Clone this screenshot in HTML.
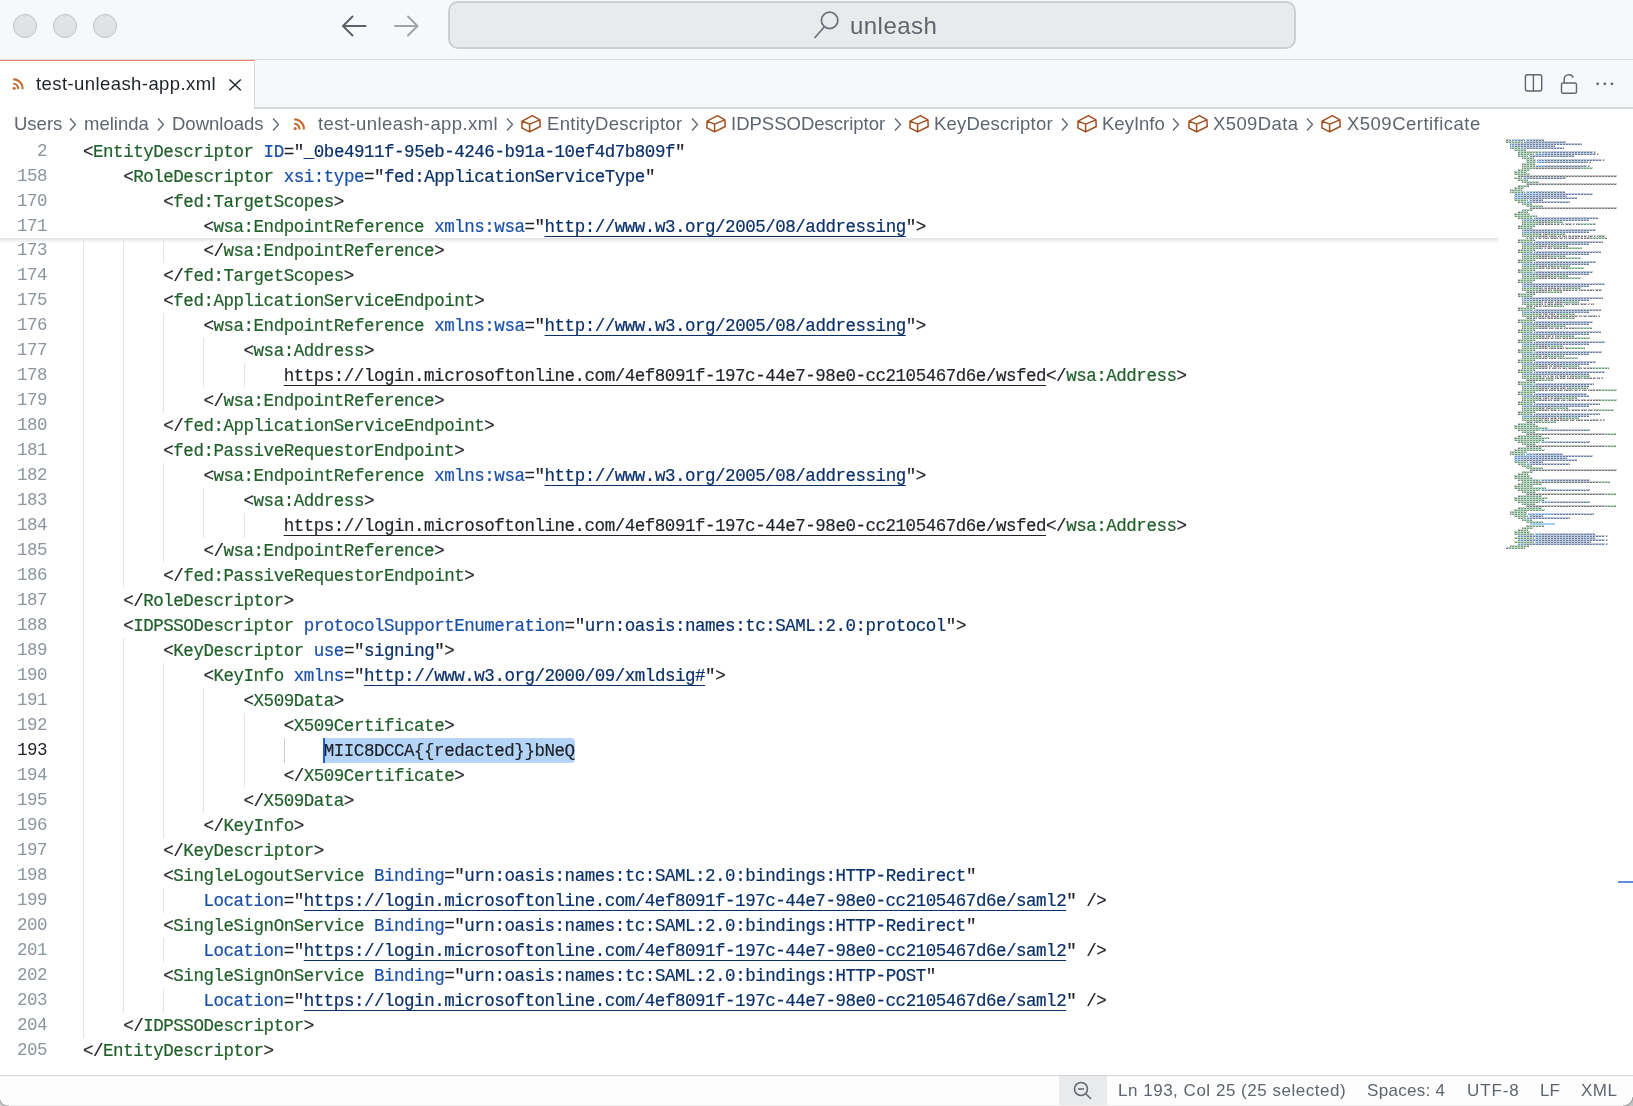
<!DOCTYPE html>
<html><head><meta charset="utf-8">
<style>
html,body{margin:0;padding:0;}
body{width:1633px;height:1106px;overflow:hidden;position:relative;background:#ffffff;font-family:"Liberation Sans",sans-serif;}
.abs{position:absolute;}
/* title bar */
#title{position:absolute;left:0;top:0;width:1633px;height:59px;background:#f7f8fa;border-bottom:1px solid #d6d9dd;}
.tl{position:absolute;top:14px;width:24px;height:24px;border-radius:50%;background:#e1e2e4;border:1px solid #c0c1c3;box-sizing:border-box;}
#search{position:absolute;left:448px;top:1px;width:848px;height:48px;box-sizing:border-box;border:2px solid #cdced1;border-radius:10px;background:#e9eaec;}
#search .txt{position:absolute;left:400px;top:9px;font-size:24px;letter-spacing:0.45px;color:#5f656d;}
/* tab bar */
#tabbar{position:absolute;left:0;top:60px;width:1633px;height:47px;background:#f7f8fa;border-bottom:2px solid #d3d7dd;box-sizing:content-box;}
#tab{position:absolute;left:0;top:60px;width:255px;height:49px;background:#ffffff;border-top:1px solid #f0806a;box-sizing:border-box;border-right:1px solid #d6d9dd;}
#tab .txt{position:absolute;left:36px;top:12px;font-size:18.5px;letter-spacing:0.42px;color:#1f2328;}
/* breadcrumbs */
.bc{position:absolute;top:113px;font-size:18.5px;color:#5e6570;white-space:pre;}
/* editor */
.ln{position:absolute;left:0;width:47px;text-align:right;font-family:"Liberation Mono",monospace;font-size:17.5px;letter-spacing:-0.5px;line-height:25px;color:#8c959f;}
.ln.act{color:#1f2328;}
.cl{position:absolute;left:83px;font-family:"Liberation Mono",monospace;font-size:17.5px;letter-spacing:-0.47px;line-height:25px;white-space:pre;color:#1f2328;-webkit-text-stroke:0.2px currentColor;}
.p{color:#1f2328}
.t{color:#1f5f29}
.a{color:#1a50a8}
.s{color:#0a3069}
.su{color:#0a3069;text-decoration:underline;text-underline-offset:4px;text-decoration-thickness:1.3px;}
.x{color:#1f2328}
.xu{color:#1f2328;text-decoration:underline;text-underline-offset:4px;text-decoration-thickness:1.3px;}
/* status bar */
#status{position:absolute;left:0;top:1075px;width:1633px;height:31px;background:#fdfdfd;border-top:1px solid #d3d7dd;box-sizing:border-box;}
.g{position:absolute;width:1px;height:25px;background:#e6e6e6;}
.g.ga{background:#cccccc;}
.st{position:absolute;top:1081px;font-size:17px;color:#5e6570;white-space:pre;}
</style></head>
<body>
<div id="root" style="position:absolute;left:0;top:0;width:1633px;height:1106px;will-change:transform">
<div id="title">
  <div class="tl" style="left:13px"></div>
  <div class="tl" style="left:53px"></div>
  <div class="tl" style="left:93px"></div>
  <svg class="abs" style="left:336px;top:10px" width="36" height="32" viewBox="0 0 36 32"><path d="M7.5 16 H29.5 M16.5 6.5 L7 16 L16.5 25.5" fill="none" stroke="#5c636b" stroke-width="2" stroke-linecap="round"/></svg>
  <svg class="abs" style="left:390px;top:10px" width="36" height="32" viewBox="0 0 36 32"><path d="M5 16 H27 M18 6.5 L27.5 16 L18 25.5" fill="none" stroke="#a0a3a8" stroke-width="2" stroke-linecap="round"/></svg>
</div>
<div id="search">
  <svg class="abs" style="left:363px;top:8px" width="30" height="32" viewBox="0 0 30 32"><circle cx="16.6" cy="9.4" r="8.2" fill="none" stroke="#6a7078" stroke-width="1.7"/><path d="M11.4 15.8 L1.6 27" stroke="#6a7078" stroke-width="1.7" fill="none"/></svg>
  <div class="txt">unleash</div>
</div>
<div id="tabbar"></div>
<div id="tab">
  <svg class="abs" style="left:12px;top:16px" width="14" height="14" viewBox="0 0 14 14"><circle cx="2.2" cy="11.2" r="1.5" fill="#c0682a"/><path d="M1.2 6.6 A5 5 0 0 1 6.2 12.2" fill="none" stroke="#c0682a" stroke-width="1.9"/><path d="M1.2 2.2 A9.4 9.4 0 0 1 10.6 12.2" fill="none" stroke="#c0682a" stroke-width="1.9"/></svg>
  <div class="txt">test-unleash-app.xml</div>
  <svg class="abs" style="left:227px;top:16px" width="16" height="16" viewBox="0 0 16 16"><path d="M2.4 2.4 L13.8 13.3 M13.8 2.4 L2.4 13.3" stroke="#1f2328" stroke-width="1.4"/></svg>
</div>
<!-- tab bar right icons -->
<svg class="abs" style="left:1522px;top:72px" width="22" height="22" viewBox="0 0 22 22"><rect x="3.4" y="2.7" width="16.3" height="16.3" rx="2" fill="none" stroke="#5e6570" stroke-width="1.4"/><path d="M11.4 2.7 V19" stroke="#5e6570" stroke-width="1.4"/></svg>
<svg class="abs" style="left:1558px;top:72px" width="22" height="24" viewBox="0 0 22 24"><rect x="3.5" y="11" width="15" height="10.3" rx="1.6" fill="none" stroke="#5e6570" stroke-width="1.4"/><path d="M6.2 11 V7.8 A4.7 4.7 0 0 1 15.2 5.6" fill="none" stroke="#5e6570" stroke-width="1.4"/></svg>
<svg class="abs" style="left:1594px;top:76px" width="22" height="14" viewBox="0 0 22 14"><circle cx="3.7" cy="7.8" r="1.4" fill="#5e6570"/><circle cx="10.8" cy="7.8" r="1.4" fill="#5e6570"/><circle cx="17.9" cy="7.8" r="1.4" fill="#5e6570"/></svg>

<!-- breadcrumbs -->
<div class="bc" style="left:14px;letter-spacing:0px">Users</div>
<svg class="abs" style="left:68px;top:117px" width="10" height="15" viewBox="0 0 10 15"><path d="M2 1.5 L7.5 7.5 L2 13.5" fill="none" stroke="#5e6570" stroke-width="1.3"/></svg>
<div class="bc" style="left:84px;letter-spacing:0px">melinda</div>
<svg class="abs" style="left:156px;top:117px" width="10" height="15" viewBox="0 0 10 15"><path d="M2 1.5 L7.5 7.5 L2 13.5" fill="none" stroke="#5e6570" stroke-width="1.3"/></svg>
<div class="bc" style="left:172px;letter-spacing:0px">Downloads</div>
<svg class="abs" style="left:271px;top:117px" width="10" height="15" viewBox="0 0 10 15"><path d="M2 1.5 L7.5 7.5 L2 13.5" fill="none" stroke="#5e6570" stroke-width="1.3"/></svg>
<svg class="abs" style="left:293px;top:117px" width="14" height="14" viewBox="0 0 14 14"><circle cx="2.2" cy="11.5" r="1.6" fill="#c0682a"/><path d="M1.2 6.8 A5.2 5.2 0 0 1 6.5 12.5" fill="none" stroke="#c0682a" stroke-width="2"/><path d="M1.2 2.2 A9.6 9.6 0 0 1 10.9 12.5" fill="none" stroke="#c0682a" stroke-width="2"/></svg>
<div class="bc" style="left:318px;letter-spacing:0.42px">test-unleash-app.xml</div>
<svg class="abs" style="left:505px;top:117px" width="10" height="15" viewBox="0 0 10 15"><path d="M2 1.5 L7.5 7.5 L2 13.5" fill="none" stroke="#5e6570" stroke-width="1.3"/></svg>
<svg class="abs" style="left:520px;top:114px" width="23" height="20" viewBox="0 0 23 20"><path d="M12.4 1.6 L19.9 5.9 L20.2 12.5 L9.6 17.9 L1.9 13.9 L2.1 7.1 Z M2.1 7.1 L9.6 10.1 L19.9 5.9 M9.6 10.1 V17.9" fill="none" stroke="#a04e1c" stroke-width="1.5" stroke-linejoin="round"/></svg>
<div class="bc" style="left:547px;letter-spacing:0.3px">EntityDescriptor</div>
<svg class="abs" style="left:690px;top:117px" width="10" height="15" viewBox="0 0 10 15"><path d="M2 1.5 L7.5 7.5 L2 13.5" fill="none" stroke="#5e6570" stroke-width="1.3"/></svg>
<svg class="abs" style="left:705px;top:114px" width="23" height="20" viewBox="0 0 23 20"><path d="M12.4 1.6 L19.9 5.9 L20.2 12.5 L9.6 17.9 L1.9 13.9 L2.1 7.1 Z M2.1 7.1 L9.6 10.1 L19.9 5.9 M9.6 10.1 V17.9" fill="none" stroke="#a04e1c" stroke-width="1.5" stroke-linejoin="round"/></svg>
<div class="bc" style="left:731px;letter-spacing:0px">IDPSSODescriptor</div>
<svg class="abs" style="left:893px;top:117px" width="10" height="15" viewBox="0 0 10 15"><path d="M2 1.5 L7.5 7.5 L2 13.5" fill="none" stroke="#5e6570" stroke-width="1.3"/></svg>
<svg class="abs" style="left:908px;top:114px" width="23" height="20" viewBox="0 0 23 20"><path d="M12.4 1.6 L19.9 5.9 L20.2 12.5 L9.6 17.9 L1.9 13.9 L2.1 7.1 Z M2.1 7.1 L9.6 10.1 L19.9 5.9 M9.6 10.1 V17.9" fill="none" stroke="#a04e1c" stroke-width="1.5" stroke-linejoin="round"/></svg>
<div class="bc" style="left:934px;letter-spacing:0.2px">KeyDescriptor</div>
<svg class="abs" style="left:1060px;top:117px" width="10" height="15" viewBox="0 0 10 15"><path d="M2 1.5 L7.5 7.5 L2 13.5" fill="none" stroke="#5e6570" stroke-width="1.3"/></svg>
<svg class="abs" style="left:1076px;top:114px" width="23" height="20" viewBox="0 0 23 20"><path d="M12.4 1.6 L19.9 5.9 L20.2 12.5 L9.6 17.9 L1.9 13.9 L2.1 7.1 Z M2.1 7.1 L9.6 10.1 L19.9 5.9 M9.6 10.1 V17.9" fill="none" stroke="#a04e1c" stroke-width="1.5" stroke-linejoin="round"/></svg>
<div class="bc" style="left:1102px;letter-spacing:0px">KeyInfo</div>
<svg class="abs" style="left:1171px;top:117px" width="10" height="15" viewBox="0 0 10 15"><path d="M2 1.5 L7.5 7.5 L2 13.5" fill="none" stroke="#5e6570" stroke-width="1.3"/></svg>
<svg class="abs" style="left:1187px;top:114px" width="23" height="20" viewBox="0 0 23 20"><path d="M12.4 1.6 L19.9 5.9 L20.2 12.5 L9.6 17.9 L1.9 13.9 L2.1 7.1 Z M2.1 7.1 L9.6 10.1 L19.9 5.9 M9.6 10.1 V17.9" fill="none" stroke="#a04e1c" stroke-width="1.5" stroke-linejoin="round"/></svg>
<div class="bc" style="left:1213px;letter-spacing:0.38px">X509Data</div>
<svg class="abs" style="left:1305px;top:117px" width="10" height="15" viewBox="0 0 10 15"><path d="M2 1.5 L7.5 7.5 L2 13.5" fill="none" stroke="#5e6570" stroke-width="1.3"/></svg>
<svg class="abs" style="left:1320px;top:114px" width="23" height="20" viewBox="0 0 23 20"><path d="M12.4 1.6 L19.9 5.9 L20.2 12.5 L9.6 17.9 L1.9 13.9 L2.1 7.1 Z M2.1 7.1 L9.6 10.1 L19.9 5.9 M9.6 10.1 V17.9" fill="none" stroke="#a04e1c" stroke-width="1.5" stroke-linejoin="round"/></svg>
<div class="bc" style="left:1347px;letter-spacing:0.48px">X509Certificate</div>

<!-- editor -->
<div class="g" style="left:83px;top:238px"></div>
<div class="g" style="left:123px;top:238px"></div>
<div class="g" style="left:163px;top:238px"></div>
<div class="g" style="left:83px;top:263px"></div>
<div class="g" style="left:123px;top:263px"></div>
<div class="g" style="left:83px;top:288px"></div>
<div class="g" style="left:123px;top:288px"></div>
<div class="g" style="left:83px;top:313px"></div>
<div class="g" style="left:123px;top:313px"></div>
<div class="g" style="left:163px;top:313px"></div>
<div class="g" style="left:83px;top:338px"></div>
<div class="g" style="left:123px;top:338px"></div>
<div class="g" style="left:163px;top:338px"></div>
<div class="g" style="left:203px;top:338px"></div>
<div class="g" style="left:83px;top:363px"></div>
<div class="g" style="left:123px;top:363px"></div>
<div class="g" style="left:163px;top:363px"></div>
<div class="g" style="left:203px;top:363px"></div>
<div class="g" style="left:244px;top:363px"></div>
<div class="g" style="left:83px;top:388px"></div>
<div class="g" style="left:123px;top:388px"></div>
<div class="g" style="left:163px;top:388px"></div>
<div class="g" style="left:83px;top:413px"></div>
<div class="g" style="left:123px;top:413px"></div>
<div class="g" style="left:83px;top:438px"></div>
<div class="g" style="left:123px;top:438px"></div>
<div class="g" style="left:83px;top:463px"></div>
<div class="g" style="left:123px;top:463px"></div>
<div class="g" style="left:163px;top:463px"></div>
<div class="g" style="left:83px;top:488px"></div>
<div class="g" style="left:123px;top:488px"></div>
<div class="g" style="left:163px;top:488px"></div>
<div class="g" style="left:203px;top:488px"></div>
<div class="g" style="left:83px;top:513px"></div>
<div class="g" style="left:123px;top:513px"></div>
<div class="g" style="left:163px;top:513px"></div>
<div class="g" style="left:203px;top:513px"></div>
<div class="g" style="left:244px;top:513px"></div>
<div class="g" style="left:83px;top:538px"></div>
<div class="g" style="left:123px;top:538px"></div>
<div class="g" style="left:163px;top:538px"></div>
<div class="g" style="left:83px;top:563px"></div>
<div class="g" style="left:123px;top:563px"></div>
<div class="g" style="left:83px;top:588px"></div>
<div class="g" style="left:83px;top:613px"></div>
<div class="g" style="left:83px;top:638px"></div>
<div class="g" style="left:123px;top:638px"></div>
<div class="g" style="left:83px;top:663px"></div>
<div class="g" style="left:123px;top:663px"></div>
<div class="g" style="left:163px;top:663px"></div>
<div class="g" style="left:83px;top:688px"></div>
<div class="g" style="left:123px;top:688px"></div>
<div class="g" style="left:163px;top:688px"></div>
<div class="g" style="left:203px;top:688px"></div>
<div class="g" style="left:83px;top:713px"></div>
<div class="g" style="left:123px;top:713px"></div>
<div class="g" style="left:163px;top:713px"></div>
<div class="g" style="left:203px;top:713px"></div>
<div class="g" style="left:244px;top:713px"></div>
<div class="g" style="left:83px;top:738px"></div>
<div class="g" style="left:123px;top:738px"></div>
<div class="g" style="left:163px;top:738px"></div>
<div class="g" style="left:203px;top:738px"></div>
<div class="g" style="left:244px;top:738px"></div>
<div class="g ga" style="left:284px;top:738px"></div>
<div class="g" style="left:83px;top:763px"></div>
<div class="g" style="left:123px;top:763px"></div>
<div class="g" style="left:163px;top:763px"></div>
<div class="g" style="left:203px;top:763px"></div>
<div class="g" style="left:244px;top:763px"></div>
<div class="g" style="left:83px;top:788px"></div>
<div class="g" style="left:123px;top:788px"></div>
<div class="g" style="left:163px;top:788px"></div>
<div class="g" style="left:203px;top:788px"></div>
<div class="g" style="left:83px;top:813px"></div>
<div class="g" style="left:123px;top:813px"></div>
<div class="g" style="left:163px;top:813px"></div>
<div class="g" style="left:83px;top:838px"></div>
<div class="g" style="left:123px;top:838px"></div>
<div class="g" style="left:83px;top:863px"></div>
<div class="g" style="left:123px;top:863px"></div>
<div class="g" style="left:83px;top:888px"></div>
<div class="g" style="left:123px;top:888px"></div>
<div class="g" style="left:163px;top:888px"></div>
<div class="g" style="left:83px;top:913px"></div>
<div class="g" style="left:123px;top:913px"></div>
<div class="g" style="left:83px;top:938px"></div>
<div class="g" style="left:123px;top:938px"></div>
<div class="g" style="left:163px;top:938px"></div>
<div class="g" style="left:83px;top:963px"></div>
<div class="g" style="left:123px;top:963px"></div>
<div class="g" style="left:83px;top:988px"></div>
<div class="g" style="left:123px;top:988px"></div>
<div class="g" style="left:163px;top:988px"></div>
<div class="g" style="left:83px;top:1013px"></div>
<div class="abs" style="left:325px;top:738px;width:250px;height:25px;background:#b5d5f8;border-radius:0 4px 4px 0"></div>
<div class="ln" style="top:139px">2</div>
<div class="ln" style="top:164px">158</div>
<div class="ln" style="top:189px">170</div>
<div class="ln" style="top:214px">171</div>
<div class="ln" style="top:238px">173</div>
<div class="ln" style="top:263px">174</div>
<div class="ln" style="top:288px">175</div>
<div class="ln" style="top:313px">176</div>
<div class="ln" style="top:338px">177</div>
<div class="ln" style="top:363px">178</div>
<div class="ln" style="top:388px">179</div>
<div class="ln" style="top:413px">180</div>
<div class="ln" style="top:438px">181</div>
<div class="ln" style="top:463px">182</div>
<div class="ln" style="top:488px">183</div>
<div class="ln" style="top:513px">184</div>
<div class="ln" style="top:538px">185</div>
<div class="ln" style="top:563px">186</div>
<div class="ln" style="top:588px">187</div>
<div class="ln" style="top:613px">188</div>
<div class="ln" style="top:638px">189</div>
<div class="ln" style="top:663px">190</div>
<div class="ln" style="top:688px">191</div>
<div class="ln" style="top:713px">192</div>
<div class="ln act" style="top:738px">193</div>
<div class="ln" style="top:763px">194</div>
<div class="ln" style="top:788px">195</div>
<div class="ln" style="top:813px">196</div>
<div class="ln" style="top:838px">197</div>
<div class="ln" style="top:863px">198</div>
<div class="ln" style="top:888px">199</div>
<div class="ln" style="top:913px">200</div>
<div class="ln" style="top:938px">201</div>
<div class="ln" style="top:963px">202</div>
<div class="ln" style="top:988px">203</div>
<div class="ln" style="top:1013px">204</div>
<div class="ln" style="top:1038px">205</div>
<div class="cl" style="top:140px"><span class="p">&lt;</span><span class="t">EntityDescriptor</span> <span class="a">ID</span><span class="p">=</span><span class="p">&quot;</span><span class="s">_0be4911f-95eb-4246-b91a-10ef4d7b809f</span><span class="p">&quot;</span></div>
<div class="cl" style="top:165px">    <span class="p">&lt;</span><span class="t">RoleDescriptor</span> <span class="a">xsi:type</span><span class="p">=</span><span class="p">&quot;</span><span class="s">fed:ApplicationServiceType</span><span class="p">&quot;</span></div>
<div class="cl" style="top:190px">        <span class="p">&lt;</span><span class="t">fed:TargetScopes</span><span class="p">&gt;</span></div>
<div class="cl" style="top:215px">            <span class="p">&lt;</span><span class="t">wsa:EndpointReference</span> <span class="a">xmlns:wsa</span><span class="p">=</span><span class="p">&quot;</span><span class="su">http://www.w3.org/2005/08/addressing</span><span class="p">&quot;</span><span class="p">&gt;</span></div>
<div class="cl" style="top:239px">            <span class="p">&lt;/</span><span class="t">wsa:EndpointReference</span><span class="p">&gt;</span></div>
<div class="cl" style="top:264px">        <span class="p">&lt;/</span><span class="t">fed:TargetScopes</span><span class="p">&gt;</span></div>
<div class="cl" style="top:289px">        <span class="p">&lt;</span><span class="t">fed:ApplicationServiceEndpoint</span><span class="p">&gt;</span></div>
<div class="cl" style="top:314px">            <span class="p">&lt;</span><span class="t">wsa:EndpointReference</span> <span class="a">xmlns:wsa</span><span class="p">=</span><span class="p">&quot;</span><span class="su">http://www.w3.org/2005/08/addressing</span><span class="p">&quot;</span><span class="p">&gt;</span></div>
<div class="cl" style="top:339px">                <span class="p">&lt;</span><span class="t">wsa:Address</span><span class="p">&gt;</span></div>
<div class="cl" style="top:364px">                    <span class="xu">https://login.microsoftonline.com/4ef8091f-197c-44e7-98e0-cc2105467d6e/wsfed</span><span class="p">&lt;/</span><span class="t">wsa:Address</span><span class="p">&gt;</span></div>
<div class="cl" style="top:389px">            <span class="p">&lt;/</span><span class="t">wsa:EndpointReference</span><span class="p">&gt;</span></div>
<div class="cl" style="top:414px">        <span class="p">&lt;/</span><span class="t">fed:ApplicationServiceEndpoint</span><span class="p">&gt;</span></div>
<div class="cl" style="top:439px">        <span class="p">&lt;</span><span class="t">fed:PassiveRequestorEndpoint</span><span class="p">&gt;</span></div>
<div class="cl" style="top:464px">            <span class="p">&lt;</span><span class="t">wsa:EndpointReference</span> <span class="a">xmlns:wsa</span><span class="p">=</span><span class="p">&quot;</span><span class="su">http://www.w3.org/2005/08/addressing</span><span class="p">&quot;</span><span class="p">&gt;</span></div>
<div class="cl" style="top:489px">                <span class="p">&lt;</span><span class="t">wsa:Address</span><span class="p">&gt;</span></div>
<div class="cl" style="top:514px">                    <span class="xu">https://login.microsoftonline.com/4ef8091f-197c-44e7-98e0-cc2105467d6e/wsfed</span><span class="p">&lt;/</span><span class="t">wsa:Address</span><span class="p">&gt;</span></div>
<div class="cl" style="top:539px">            <span class="p">&lt;/</span><span class="t">wsa:EndpointReference</span><span class="p">&gt;</span></div>
<div class="cl" style="top:564px">        <span class="p">&lt;/</span><span class="t">fed:PassiveRequestorEndpoint</span><span class="p">&gt;</span></div>
<div class="cl" style="top:589px">    <span class="p">&lt;/</span><span class="t">RoleDescriptor</span><span class="p">&gt;</span></div>
<div class="cl" style="top:614px">    <span class="p">&lt;</span><span class="t">IDPSSODescriptor</span> <span class="a">protocolSupportEnumeration</span><span class="p">=</span><span class="p">&quot;</span><span class="s">urn:oasis:names:tc:SAML:2.0:protocol</span><span class="p">&quot;</span><span class="p">&gt;</span></div>
<div class="cl" style="top:639px">        <span class="p">&lt;</span><span class="t">KeyDescriptor</span> <span class="a">use</span><span class="p">=</span><span class="p">&quot;</span><span class="s">signing</span><span class="p">&quot;</span><span class="p">&gt;</span></div>
<div class="cl" style="top:664px">            <span class="p">&lt;</span><span class="t">KeyInfo</span> <span class="a">xmlns</span><span class="p">=</span><span class="p">&quot;</span><span class="su">http://www.w3.org/2000/09/xmldsig#</span><span class="p">&quot;</span><span class="p">&gt;</span></div>
<div class="cl" style="top:689px">                <span class="p">&lt;</span><span class="t">X509Data</span><span class="p">&gt;</span></div>
<div class="cl" style="top:714px">                    <span class="p">&lt;</span><span class="t">X509Certificate</span><span class="p">&gt;</span></div>
<div class="cl" style="top:739px">                        <span class="x">MIIC8DCCA{{redacted}}bNeQ</span></div>
<div class="cl" style="top:764px">                    <span class="p">&lt;/</span><span class="t">X509Certificate</span><span class="p">&gt;</span></div>
<div class="cl" style="top:789px">                <span class="p">&lt;/</span><span class="t">X509Data</span><span class="p">&gt;</span></div>
<div class="cl" style="top:814px">            <span class="p">&lt;/</span><span class="t">KeyInfo</span><span class="p">&gt;</span></div>
<div class="cl" style="top:839px">        <span class="p">&lt;/</span><span class="t">KeyDescriptor</span><span class="p">&gt;</span></div>
<div class="cl" style="top:864px">        <span class="p">&lt;</span><span class="t">SingleLogoutService</span> <span class="a">Binding</span><span class="p">=</span><span class="p">&quot;</span><span class="s">urn:oasis:names:tc:SAML:2.0:bindings:HTTP-Redirect</span><span class="p">&quot;</span></div>
<div class="cl" style="top:889px">            <span class="a">Location</span><span class="p">=</span><span class="p">&quot;</span><span class="su">https://login.microsoftonline.com/4ef8091f-197c-44e7-98e0-cc2105467d6e/saml2</span><span class="p">&quot;</span> <span class="p">/&gt;</span></div>
<div class="cl" style="top:914px">        <span class="p">&lt;</span><span class="t">SingleSignOnService</span> <span class="a">Binding</span><span class="p">=</span><span class="p">&quot;</span><span class="s">urn:oasis:names:tc:SAML:2.0:bindings:HTTP-Redirect</span><span class="p">&quot;</span></div>
<div class="cl" style="top:939px">            <span class="a">Location</span><span class="p">=</span><span class="p">&quot;</span><span class="su">https://login.microsoftonline.com/4ef8091f-197c-44e7-98e0-cc2105467d6e/saml2</span><span class="p">&quot;</span> <span class="p">/&gt;</span></div>
<div class="cl" style="top:964px">        <span class="p">&lt;</span><span class="t">SingleSignOnService</span> <span class="a">Binding</span><span class="p">=</span><span class="p">&quot;</span><span class="s">urn:oasis:names:tc:SAML:2.0:bindings:HTTP-POST</span><span class="p">&quot;</span></div>
<div class="cl" style="top:989px">            <span class="a">Location</span><span class="p">=</span><span class="p">&quot;</span><span class="su">https://login.microsoftonline.com/4ef8091f-197c-44e7-98e0-cc2105467d6e/saml2</span><span class="p">&quot;</span> <span class="p">/&gt;</span></div>
<div class="cl" style="top:1014px">    <span class="p">&lt;/</span><span class="t">IDPSSODescriptor</span><span class="p">&gt;</span></div>
<div class="cl" style="top:1039px"><span class="p">&lt;/</span><span class="t">EntityDescriptor</span><span class="p">&gt;</span></div>
<div class="abs" style="left:323px;top:738px;width:2px;height:25px;background:#1f5bd6"></div>
<div class="abs" style="left:0;top:238px;width:1498px;height:5px;background:linear-gradient(#dfe1e4,rgba(255,255,255,0))"></div>
<svg class="abs" style="left:0;top:0" width="1633" height="1106"><defs><pattern id="pt" x="0" y="0" width="3" height="2" patternUnits="userSpaceOnUse"><rect x="0" y="0" width="2" height="1" fill="#116329" opacity="0.62"/><rect x="0" y="1" width="3" height="1" fill="#116329" opacity="0.26"/><rect x="2" y="0" width="1" height="1" fill="#116329" opacity="0.22"/></pattern><pattern id="pa" x="0" y="0" width="3" height="2" patternUnits="userSpaceOnUse"><rect x="0" y="0" width="2" height="1" fill="#0550ae" opacity="0.62"/><rect x="0" y="1" width="3" height="1" fill="#0550ae" opacity="0.26"/><rect x="2" y="0" width="1" height="1" fill="#0550ae" opacity="0.22"/></pattern><pattern id="ps" x="0" y="0" width="3" height="2" patternUnits="userSpaceOnUse"><rect x="0" y="0" width="2" height="1" fill="#0a3069" opacity="0.62"/><rect x="0" y="1" width="3" height="1" fill="#0a3069" opacity="0.26"/><rect x="2" y="0" width="1" height="1" fill="#0a3069" opacity="0.22"/></pattern><pattern id="px" x="0" y="0" width="3" height="2" patternUnits="userSpaceOnUse"><rect x="0" y="0" width="2" height="1" fill="#1f2328" opacity="0.62"/><rect x="0" y="1" width="3" height="1" fill="#1f2328" opacity="0.26"/><rect x="2" y="0" width="1" height="1" fill="#1f2328" opacity="0.22"/></pattern></defs><g><rect x="1506" y="139" width="2" height="2" fill="url(#px)"/><rect x="1508" y="139" width="3" height="2" fill="url(#pt)"/><rect x="1512" y="139" width="7" height="2" fill="url(#pa)"/><rect x="1519" y="139" width="1" height="2" fill="url(#px)"/><rect x="1520" y="139" width="1" height="2" fill="url(#px)"/><rect x="1521" y="139" width="3" height="2" fill="url(#ps)"/><rect x="1524" y="139" width="1" height="2" fill="url(#px)"/><rect x="1526" y="139" width="8" height="2" fill="url(#pa)"/><rect x="1534" y="139" width="1" height="2" fill="url(#px)"/><rect x="1535" y="139" width="1" height="2" fill="url(#px)"/><rect x="1536" y="139" width="5" height="2" fill="url(#ps)"/><rect x="1541" y="139" width="1" height="2" fill="url(#px)"/><rect x="1542" y="139" width="2" height="2" fill="url(#px)"/><rect x="1506" y="141" width="1" height="2" fill="url(#px)"/><rect x="1507" y="141" width="16" height="2" fill="url(#pt)"/><rect x="1524" y="141" width="2" height="2" fill="url(#pa)"/><rect x="1526" y="141" width="1" height="2" fill="url(#px)"/><rect x="1527" y="141" width="1" height="2" fill="url(#px)"/><rect x="1528" y="141" width="37" height="2" fill="url(#ps)"/><rect x="1565" y="141" width="1" height="2" fill="url(#px)"/><rect x="1510" y="143" width="8" height="2" fill="url(#pa)"/><rect x="1518" y="143" width="1" height="2" fill="url(#px)"/><rect x="1519" y="143" width="1" height="2" fill="url(#px)"/><rect x="1520" y="143" width="61" height="2" fill="url(#ps)"/><rect x="1581" y="143" width="1" height="2" fill="url(#px)"/><rect x="1510" y="145" width="5" height="2" fill="url(#pa)"/><rect x="1515" y="145" width="1" height="2" fill="url(#px)"/><rect x="1516" y="145" width="1" height="2" fill="url(#px)"/><rect x="1517" y="145" width="36" height="2" fill="url(#ps)"/><rect x="1553" y="145" width="1" height="2" fill="url(#px)"/><rect x="1554" y="145" width="1" height="2" fill="url(#px)"/><rect x="1510" y="147" width="1" height="2" fill="url(#px)"/><rect x="1511" y="147" width="9" height="2" fill="url(#pt)"/><rect x="1521" y="147" width="5" height="2" fill="url(#pa)"/><rect x="1526" y="147" width="1" height="2" fill="url(#px)"/><rect x="1527" y="147" width="1" height="2" fill="url(#px)"/><rect x="1528" y="147" width="34" height="2" fill="url(#ps)"/><rect x="1562" y="147" width="1" height="2" fill="url(#px)"/><rect x="1563" y="147" width="1" height="2" fill="url(#px)"/><rect x="1514" y="149" width="1" height="2" fill="url(#px)"/><rect x="1515" y="149" width="10" height="2" fill="url(#pt)"/><rect x="1525" y="149" width="1" height="2" fill="url(#px)"/><rect x="1518" y="151" width="1" height="2" fill="url(#px)"/><rect x="1519" y="151" width="22" height="2" fill="url(#pt)"/><rect x="1542" y="151" width="9" height="2" fill="url(#pa)"/><rect x="1551" y="151" width="1" height="2" fill="url(#px)"/><rect x="1552" y="151" width="1" height="2" fill="url(#px)"/><rect x="1553" y="151" width="39" height="2" fill="url(#ps)"/><rect x="1592" y="151" width="1" height="2" fill="url(#px)"/><rect x="1594" y="151" width="2" height="2" fill="url(#px)"/><rect x="1518" y="153" width="1" height="2" fill="url(#px)"/><rect x="1519" y="153" width="15" height="2" fill="url(#pt)"/><rect x="1535" y="153" width="9" height="2" fill="url(#pa)"/><rect x="1544" y="153" width="1" height="2" fill="url(#px)"/><rect x="1545" y="153" width="1" height="2" fill="url(#px)"/><rect x="1546" y="153" width="49" height="2" fill="url(#ps)"/><rect x="1595" y="153" width="1" height="2" fill="url(#px)"/><rect x="1597" y="153" width="2" height="2" fill="url(#px)"/><rect x="1518" y="155" width="1" height="2" fill="url(#px)"/><rect x="1519" y="155" width="9" height="2" fill="url(#pt)"/><rect x="1529" y="155" width="3" height="2" fill="url(#pa)"/><rect x="1532" y="155" width="1" height="2" fill="url(#px)"/><rect x="1533" y="155" width="1" height="2" fill="url(#px)"/><rect x="1534" y="155" width="38" height="2" fill="url(#ps)"/><rect x="1572" y="155" width="1" height="2" fill="url(#px)"/><rect x="1573" y="155" width="1" height="2" fill="url(#px)"/><rect x="1522" y="157" width="1" height="2" fill="url(#px)"/><rect x="1523" y="157" width="10" height="2" fill="url(#pt)"/><rect x="1533" y="157" width="1" height="2" fill="url(#px)"/><rect x="1526" y="159" width="1" height="2" fill="url(#px)"/><rect x="1527" y="159" width="9" height="2" fill="url(#pt)"/><rect x="1537" y="159" width="9" height="2" fill="url(#pa)"/><rect x="1546" y="159" width="1" height="2" fill="url(#px)"/><rect x="1547" y="159" width="1" height="2" fill="url(#px)"/><rect x="1548" y="159" width="53" height="2" fill="url(#ps)"/><rect x="1601" y="159" width="1" height="2" fill="url(#px)"/><rect x="1603" y="159" width="2" height="2" fill="url(#px)"/><rect x="1526" y="161" width="1" height="2" fill="url(#px)"/><rect x="1527" y="161" width="9" height="2" fill="url(#pt)"/><rect x="1537" y="161" width="9" height="2" fill="url(#pa)"/><rect x="1546" y="161" width="1" height="2" fill="url(#px)"/><rect x="1547" y="161" width="1" height="2" fill="url(#px)"/><rect x="1548" y="161" width="39" height="2" fill="url(#ps)"/><rect x="1587" y="161" width="1" height="2" fill="url(#px)"/><rect x="1589" y="161" width="2" height="2" fill="url(#px)"/><rect x="1522" y="163" width="2" height="2" fill="url(#px)"/><rect x="1524" y="163" width="10" height="2" fill="url(#pt)"/><rect x="1534" y="163" width="1" height="2" fill="url(#px)"/><rect x="1522" y="165" width="1" height="2" fill="url(#px)"/><rect x="1523" y="165" width="12" height="2" fill="url(#pt)"/><rect x="1536" y="165" width="9" height="2" fill="url(#pa)"/><rect x="1545" y="165" width="1" height="2" fill="url(#px)"/><rect x="1546" y="165" width="1" height="2" fill="url(#px)"/><rect x="1547" y="165" width="39" height="2" fill="url(#ps)"/><rect x="1586" y="165" width="1" height="2" fill="url(#px)"/><rect x="1588" y="165" width="2" height="2" fill="url(#px)"/><rect x="1522" y="167" width="1" height="2" fill="url(#px)"/><rect x="1523" y="167" width="11" height="2" fill="url(#pt)"/><rect x="1534" y="167" width="1" height="2" fill="url(#px)"/><rect x="1535" y="167" width="44" height="2" fill="url(#px)"/><rect x="1579" y="167" width="2" height="2" fill="url(#px)"/><rect x="1581" y="167" width="11" height="2" fill="url(#pt)"/><rect x="1592" y="167" width="1" height="2" fill="url(#px)"/><rect x="1518" y="169" width="2" height="2" fill="url(#px)"/><rect x="1520" y="169" width="9" height="2" fill="url(#pt)"/><rect x="1529" y="169" width="1" height="2" fill="url(#px)"/><rect x="1514" y="171" width="2" height="2" fill="url(#px)"/><rect x="1516" y="171" width="10" height="2" fill="url(#pt)"/><rect x="1526" y="171" width="1" height="2" fill="url(#px)"/><rect x="1514" y="173" width="1" height="2" fill="url(#px)"/><rect x="1515" y="173" width="14" height="2" fill="url(#pt)"/><rect x="1529" y="173" width="1" height="2" fill="url(#px)"/><rect x="1518" y="175" width="99" height="2" fill="url(#px)"/><rect x="1514" y="177" width="1" height="2" fill="url(#px)"/><rect x="1515" y="177" width="7" height="2" fill="url(#pt)"/><rect x="1523" y="177" width="5" height="2" fill="url(#pa)"/><rect x="1528" y="177" width="1" height="2" fill="url(#px)"/><rect x="1529" y="177" width="1" height="2" fill="url(#px)"/><rect x="1530" y="177" width="34" height="2" fill="url(#ps)"/><rect x="1564" y="177" width="1" height="2" fill="url(#px)"/><rect x="1565" y="177" width="1" height="2" fill="url(#px)"/><rect x="1518" y="179" width="1" height="2" fill="url(#px)"/><rect x="1519" y="179" width="8" height="2" fill="url(#pt)"/><rect x="1527" y="179" width="1" height="2" fill="url(#px)"/><rect x="1522" y="181" width="1" height="2" fill="url(#px)"/><rect x="1523" y="181" width="15" height="2" fill="url(#pt)"/><rect x="1538" y="181" width="1" height="2" fill="url(#px)"/><rect x="1526" y="183" width="91" height="2" fill="url(#px)"/><rect x="1518" y="185" width="2" height="2" fill="url(#px)"/><rect x="1520" y="185" width="8" height="2" fill="url(#pt)"/><rect x="1528" y="185" width="1" height="2" fill="url(#px)"/><rect x="1514" y="187" width="2" height="2" fill="url(#px)"/><rect x="1516" y="187" width="7" height="2" fill="url(#pt)"/><rect x="1523" y="187" width="1" height="2" fill="url(#px)"/><rect x="1510" y="189" width="2" height="2" fill="url(#px)"/><rect x="1512" y="189" width="9" height="2" fill="url(#pt)"/><rect x="1521" y="189" width="1" height="2" fill="url(#px)"/><rect x="1510" y="191" width="1" height="2" fill="url(#px)"/><rect x="1511" y="191" width="14" height="2" fill="url(#pt)"/><rect x="1526" y="191" width="8" height="2" fill="url(#pa)"/><rect x="1534" y="191" width="1" height="2" fill="url(#px)"/><rect x="1535" y="191" width="1" height="2" fill="url(#px)"/><rect x="1536" y="191" width="28" height="2" fill="url(#ps)"/><rect x="1564" y="191" width="1" height="2" fill="url(#px)"/><rect x="1514" y="193" width="26" height="2" fill="url(#pa)"/><rect x="1540" y="193" width="1" height="2" fill="url(#px)"/><rect x="1541" y="193" width="1" height="2" fill="url(#px)"/><rect x="1542" y="193" width="50" height="2" fill="url(#ps)"/><rect x="1592" y="193" width="1" height="2" fill="url(#px)"/><rect x="1514" y="195" width="9" height="2" fill="url(#pa)"/><rect x="1523" y="195" width="1" height="2" fill="url(#px)"/><rect x="1524" y="195" width="1" height="2" fill="url(#px)"/><rect x="1525" y="195" width="41" height="2" fill="url(#ps)"/><rect x="1566" y="195" width="1" height="2" fill="url(#px)"/><rect x="1514" y="197" width="9" height="2" fill="url(#pa)"/><rect x="1523" y="197" width="1" height="2" fill="url(#px)"/><rect x="1524" y="197" width="1" height="2" fill="url(#px)"/><rect x="1525" y="197" width="50" height="2" fill="url(#ps)"/><rect x="1575" y="197" width="1" height="2" fill="url(#px)"/><rect x="1576" y="197" width="1" height="2" fill="url(#px)"/><rect x="1514" y="199" width="1" height="2" fill="url(#px)"/><rect x="1515" y="199" width="13" height="2" fill="url(#pt)"/><rect x="1529" y="199" width="3" height="2" fill="url(#pa)"/><rect x="1532" y="199" width="1" height="2" fill="url(#px)"/><rect x="1533" y="199" width="1" height="2" fill="url(#px)"/><rect x="1534" y="199" width="7" height="2" fill="url(#ps)"/><rect x="1541" y="199" width="1" height="2" fill="url(#px)"/><rect x="1542" y="199" width="1" height="2" fill="url(#px)"/><rect x="1518" y="201" width="1" height="2" fill="url(#px)"/><rect x="1519" y="201" width="7" height="2" fill="url(#pt)"/><rect x="1527" y="201" width="5" height="2" fill="url(#pa)"/><rect x="1532" y="201" width="1" height="2" fill="url(#px)"/><rect x="1533" y="201" width="1" height="2" fill="url(#px)"/><rect x="1534" y="201" width="34" height="2" fill="url(#ps)"/><rect x="1568" y="201" width="1" height="2" fill="url(#px)"/><rect x="1569" y="201" width="1" height="2" fill="url(#px)"/><rect x="1522" y="203" width="1" height="2" fill="url(#px)"/><rect x="1523" y="203" width="8" height="2" fill="url(#pt)"/><rect x="1531" y="203" width="1" height="2" fill="url(#px)"/><rect x="1526" y="205" width="1" height="2" fill="url(#px)"/><rect x="1527" y="205" width="15" height="2" fill="url(#pt)"/><rect x="1542" y="205" width="1" height="2" fill="url(#px)"/><rect x="1530" y="207" width="87" height="2" fill="url(#px)"/><rect x="1522" y="209" width="2" height="2" fill="url(#px)"/><rect x="1524" y="209" width="8" height="2" fill="url(#pt)"/><rect x="1532" y="209" width="1" height="2" fill="url(#px)"/><rect x="1518" y="211" width="2" height="2" fill="url(#px)"/><rect x="1520" y="211" width="7" height="2" fill="url(#pt)"/><rect x="1527" y="211" width="1" height="2" fill="url(#px)"/><rect x="1514" y="213" width="2" height="2" fill="url(#px)"/><rect x="1516" y="213" width="13" height="2" fill="url(#pt)"/><rect x="1529" y="213" width="1" height="2" fill="url(#px)"/><rect x="1514" y="215" width="1" height="2" fill="url(#px)"/><rect x="1515" y="215" width="21" height="2" fill="url(#pt)"/><rect x="1536" y="215" width="1" height="2" fill="url(#px)"/><rect x="1518" y="217" width="1" height="2" fill="url(#px)"/><rect x="1519" y="217" width="14" height="2" fill="url(#pt)"/><rect x="1534" y="217" width="3" height="2" fill="url(#pa)"/><rect x="1537" y="217" width="1" height="2" fill="url(#px)"/><rect x="1538" y="217" width="1" height="2" fill="url(#px)"/><rect x="1539" y="217" width="58" height="2" fill="url(#ps)"/><rect x="1597" y="217" width="1" height="2" fill="url(#px)"/><rect x="1522" y="219" width="10" height="2" fill="url(#pa)"/><rect x="1532" y="219" width="1" height="2" fill="url(#px)"/><rect x="1533" y="219" width="1" height="2" fill="url(#px)"/><rect x="1534" y="219" width="53" height="2" fill="url(#ps)"/><rect x="1587" y="219" width="1" height="2" fill="url(#px)"/><rect x="1588" y="219" width="1" height="2" fill="url(#px)"/><rect x="1522" y="221" width="1" height="2" fill="url(#px)"/><rect x="1523" y="221" width="16" height="2" fill="url(#pt)"/><rect x="1539" y="221" width="1" height="2" fill="url(#px)"/><rect x="1540" y="221" width="4" height="2" fill="url(#px)"/><rect x="1544" y="221" width="2" height="2" fill="url(#px)"/><rect x="1546" y="221" width="16" height="2" fill="url(#pt)"/><rect x="1562" y="221" width="1" height="2" fill="url(#px)"/><rect x="1522" y="223" width="1" height="2" fill="url(#px)"/><rect x="1523" y="223" width="16" height="2" fill="url(#pt)"/><rect x="1539" y="223" width="1" height="2" fill="url(#px)"/><rect x="1540" y="223" width="4" height="2" fill="url(#px)"/><rect x="1545" y="223" width="8" height="2" fill="url(#px)"/><rect x="1554" y="223" width="2" height="2" fill="url(#px)"/><rect x="1557" y="223" width="3" height="2" fill="url(#px)"/><rect x="1561" y="223" width="3" height="2" fill="url(#px)"/><rect x="1565" y="223" width="7" height="2" fill="url(#px)"/><rect x="1573" y="223" width="2" height="2" fill="url(#px)"/><rect x="1576" y="223" width="1" height="2" fill="url(#px)"/><rect x="1577" y="223" width="2" height="2" fill="url(#px)"/><rect x="1579" y="223" width="16" height="2" fill="url(#pt)"/><rect x="1595" y="223" width="1" height="2" fill="url(#px)"/><rect x="1518" y="225" width="2" height="2" fill="url(#px)"/><rect x="1520" y="225" width="14" height="2" fill="url(#pt)"/><rect x="1534" y="225" width="1" height="2" fill="url(#px)"/><rect x="1518" y="227" width="1" height="2" fill="url(#px)"/><rect x="1519" y="227" width="14" height="2" fill="url(#pt)"/><rect x="1522" y="229" width="3" height="2" fill="url(#pa)"/><rect x="1525" y="229" width="1" height="2" fill="url(#px)"/><rect x="1526" y="229" width="1" height="2" fill="url(#px)"/><rect x="1527" y="229" width="68" height="2" fill="url(#ps)"/><rect x="1595" y="229" width="1" height="2" fill="url(#px)"/><rect x="1522" y="231" width="10" height="2" fill="url(#pa)"/><rect x="1532" y="231" width="1" height="2" fill="url(#px)"/><rect x="1533" y="231" width="1" height="2" fill="url(#px)"/><rect x="1534" y="231" width="53" height="2" fill="url(#ps)"/><rect x="1587" y="231" width="1" height="2" fill="url(#px)"/><rect x="1588" y="231" width="1" height="2" fill="url(#px)"/><rect x="1522" y="233" width="1" height="2" fill="url(#px)"/><rect x="1523" y="233" width="16" height="2" fill="url(#pt)"/><rect x="1539" y="233" width="1" height="2" fill="url(#px)"/><rect x="1540" y="233" width="2" height="2" fill="url(#px)"/><rect x="1543" y="233" width="3" height="2" fill="url(#px)"/><rect x="1546" y="233" width="2" height="2" fill="url(#px)"/><rect x="1548" y="233" width="16" height="2" fill="url(#pt)"/><rect x="1564" y="233" width="1" height="2" fill="url(#px)"/><rect x="1522" y="235" width="1" height="2" fill="url(#px)"/><rect x="1523" y="235" width="16" height="2" fill="url(#pt)"/><rect x="1539" y="235" width="1" height="2" fill="url(#px)"/><rect x="1540" y="235" width="8" height="2" fill="url(#px)"/><rect x="1549" y="235" width="8" height="2" fill="url(#px)"/><rect x="1558" y="235" width="3" height="2" fill="url(#px)"/><rect x="1562" y="235" width="5" height="2" fill="url(#px)"/><rect x="1568" y="235" width="3" height="2" fill="url(#px)"/><rect x="1572" y="235" width="8" height="2" fill="url(#px)"/><rect x="1581" y="235" width="2" height="2" fill="url(#px)"/><rect x="1584" y="235" width="3" height="2" fill="url(#px)"/><rect x="1588" y="235" width="5" height="2" fill="url(#px)"/><rect x="1594" y="235" width="2" height="2" fill="url(#px)"/><rect x="1597" y="235" width="8" height="2" fill="url(#px)"/><rect x="1526" y="237" width="2" height="2" fill="url(#px)"/><rect x="1529" y="237" width="5" height="2" fill="url(#px)"/><rect x="1535" y="237" width="2" height="2" fill="url(#px)"/><rect x="1538" y="237" width="4" height="2" fill="url(#px)"/><rect x="1543" y="237" width="6" height="2" fill="url(#px)"/><rect x="1550" y="237" width="8" height="2" fill="url(#px)"/><rect x="1559" y="237" width="4" height="2" fill="url(#px)"/><rect x="1564" y="237" width="3" height="2" fill="url(#px)"/><rect x="1568" y="237" width="6" height="2" fill="url(#px)"/><rect x="1575" y="237" width="4" height="2" fill="url(#px)"/><rect x="1580" y="237" width="3" height="2" fill="url(#px)"/><rect x="1584" y="237" width="4" height="2" fill="url(#px)"/><rect x="1588" y="237" width="2" height="2" fill="url(#px)"/><rect x="1590" y="237" width="16" height="2" fill="url(#pt)"/><rect x="1606" y="237" width="1" height="2" fill="url(#px)"/><rect x="1518" y="239" width="2" height="2" fill="url(#px)"/><rect x="1520" y="239" width="14" height="2" fill="url(#pt)"/><rect x="1534" y="239" width="1" height="2" fill="url(#px)"/><rect x="1518" y="241" width="1" height="2" fill="url(#px)"/><rect x="1519" y="241" width="14" height="2" fill="url(#pt)"/><rect x="1534" y="241" width="3" height="2" fill="url(#pa)"/><rect x="1537" y="241" width="1" height="2" fill="url(#px)"/><rect x="1538" y="241" width="1" height="2" fill="url(#px)"/><rect x="1539" y="241" width="63" height="2" fill="url(#ps)"/><rect x="1602" y="241" width="1" height="2" fill="url(#px)"/><rect x="1522" y="243" width="10" height="2" fill="url(#pa)"/><rect x="1532" y="243" width="1" height="2" fill="url(#px)"/><rect x="1533" y="243" width="1" height="2" fill="url(#px)"/><rect x="1534" y="243" width="53" height="2" fill="url(#ps)"/><rect x="1587" y="243" width="1" height="2" fill="url(#px)"/><rect x="1588" y="243" width="1" height="2" fill="url(#px)"/><rect x="1522" y="245" width="1" height="2" fill="url(#px)"/><rect x="1523" y="245" width="16" height="2" fill="url(#pt)"/><rect x="1539" y="245" width="1" height="2" fill="url(#px)"/><rect x="1540" y="245" width="7" height="2" fill="url(#px)"/><rect x="1548" y="245" width="1" height="2" fill="url(#px)"/><rect x="1549" y="245" width="2" height="2" fill="url(#px)"/><rect x="1551" y="245" width="16" height="2" fill="url(#pt)"/><rect x="1567" y="245" width="1" height="2" fill="url(#px)"/><rect x="1522" y="247" width="1" height="2" fill="url(#px)"/><rect x="1523" y="247" width="16" height="2" fill="url(#pt)"/><rect x="1539" y="247" width="1" height="2" fill="url(#px)"/><rect x="1540" y="247" width="3" height="2" fill="url(#px)"/><rect x="1544" y="247" width="2" height="2" fill="url(#px)"/><rect x="1547" y="247" width="5" height="2" fill="url(#px)"/><rect x="1553" y="247" width="9" height="2" fill="url(#px)"/><rect x="1563" y="247" width="2" height="2" fill="url(#px)"/><rect x="1565" y="247" width="16" height="2" fill="url(#pt)"/><rect x="1581" y="247" width="1" height="2" fill="url(#px)"/><rect x="1518" y="249" width="2" height="2" fill="url(#px)"/><rect x="1520" y="249" width="14" height="2" fill="url(#pt)"/><rect x="1534" y="249" width="1" height="2" fill="url(#px)"/><rect x="1518" y="251" width="1" height="2" fill="url(#px)"/><rect x="1519" y="251" width="14" height="2" fill="url(#pt)"/><rect x="1534" y="251" width="3" height="2" fill="url(#pa)"/><rect x="1537" y="251" width="1" height="2" fill="url(#px)"/><rect x="1538" y="251" width="1" height="2" fill="url(#px)"/><rect x="1539" y="251" width="61" height="2" fill="url(#ps)"/><rect x="1600" y="251" width="1" height="2" fill="url(#px)"/><rect x="1522" y="253" width="10" height="2" fill="url(#pa)"/><rect x="1532" y="253" width="1" height="2" fill="url(#px)"/><rect x="1533" y="253" width="1" height="2" fill="url(#px)"/><rect x="1534" y="253" width="53" height="2" fill="url(#ps)"/><rect x="1587" y="253" width="1" height="2" fill="url(#px)"/><rect x="1588" y="253" width="1" height="2" fill="url(#px)"/><rect x="1522" y="255" width="1" height="2" fill="url(#px)"/><rect x="1523" y="255" width="16" height="2" fill="url(#pt)"/><rect x="1539" y="255" width="1" height="2" fill="url(#px)"/><rect x="1540" y="255" width="7" height="2" fill="url(#px)"/><rect x="1547" y="255" width="2" height="2" fill="url(#px)"/><rect x="1549" y="255" width="16" height="2" fill="url(#pt)"/><rect x="1565" y="255" width="1" height="2" fill="url(#px)"/><rect x="1522" y="257" width="1" height="2" fill="url(#px)"/><rect x="1523" y="257" width="16" height="2" fill="url(#pt)"/><rect x="1539" y="257" width="1" height="2" fill="url(#px)"/><rect x="1540" y="257" width="7" height="2" fill="url(#px)"/><rect x="1548" y="257" width="9" height="2" fill="url(#px)"/><rect x="1558" y="257" width="4" height="2" fill="url(#px)"/><rect x="1562" y="257" width="2" height="2" fill="url(#px)"/><rect x="1564" y="257" width="16" height="2" fill="url(#pt)"/><rect x="1580" y="257" width="1" height="2" fill="url(#px)"/><rect x="1518" y="259" width="2" height="2" fill="url(#px)"/><rect x="1520" y="259" width="14" height="2" fill="url(#pt)"/><rect x="1534" y="259" width="1" height="2" fill="url(#px)"/><rect x="1518" y="261" width="1" height="2" fill="url(#px)"/><rect x="1519" y="261" width="14" height="2" fill="url(#pt)"/><rect x="1534" y="261" width="3" height="2" fill="url(#pa)"/><rect x="1537" y="261" width="1" height="2" fill="url(#px)"/><rect x="1538" y="261" width="1" height="2" fill="url(#px)"/><rect x="1539" y="261" width="56" height="2" fill="url(#ps)"/><rect x="1595" y="261" width="1" height="2" fill="url(#px)"/><rect x="1522" y="263" width="10" height="2" fill="url(#pa)"/><rect x="1532" y="263" width="1" height="2" fill="url(#px)"/><rect x="1533" y="263" width="1" height="2" fill="url(#px)"/><rect x="1534" y="263" width="53" height="2" fill="url(#ps)"/><rect x="1587" y="263" width="1" height="2" fill="url(#px)"/><rect x="1588" y="263" width="1" height="2" fill="url(#px)"/><rect x="1522" y="265" width="1" height="2" fill="url(#px)"/><rect x="1523" y="265" width="16" height="2" fill="url(#pt)"/><rect x="1539" y="265" width="1" height="2" fill="url(#px)"/><rect x="1540" y="265" width="7" height="2" fill="url(#px)"/><rect x="1548" y="265" width="3" height="2" fill="url(#px)"/><rect x="1551" y="265" width="2" height="2" fill="url(#px)"/><rect x="1553" y="265" width="16" height="2" fill="url(#pt)"/><rect x="1569" y="265" width="1" height="2" fill="url(#px)"/><rect x="1522" y="267" width="1" height="2" fill="url(#px)"/><rect x="1523" y="267" width="16" height="2" fill="url(#pt)"/><rect x="1539" y="267" width="1" height="2" fill="url(#px)"/><rect x="1540" y="267" width="5" height="2" fill="url(#px)"/><rect x="1546" y="267" width="4" height="2" fill="url(#px)"/><rect x="1551" y="267" width="5" height="2" fill="url(#px)"/><rect x="1557" y="267" width="3" height="2" fill="url(#px)"/><rect x="1561" y="267" width="4" height="2" fill="url(#px)"/><rect x="1565" y="267" width="2" height="2" fill="url(#px)"/><rect x="1567" y="267" width="16" height="2" fill="url(#pt)"/><rect x="1583" y="267" width="1" height="2" fill="url(#px)"/><rect x="1518" y="269" width="2" height="2" fill="url(#px)"/><rect x="1520" y="269" width="14" height="2" fill="url(#pt)"/><rect x="1534" y="269" width="1" height="2" fill="url(#px)"/><rect x="1518" y="271" width="1" height="2" fill="url(#px)"/><rect x="1519" y="271" width="14" height="2" fill="url(#pt)"/><rect x="1534" y="271" width="3" height="2" fill="url(#pa)"/><rect x="1537" y="271" width="1" height="2" fill="url(#px)"/><rect x="1538" y="271" width="1" height="2" fill="url(#px)"/><rect x="1539" y="271" width="53" height="2" fill="url(#ps)"/><rect x="1592" y="271" width="1" height="2" fill="url(#px)"/><rect x="1522" y="273" width="10" height="2" fill="url(#pa)"/><rect x="1532" y="273" width="1" height="2" fill="url(#px)"/><rect x="1533" y="273" width="1" height="2" fill="url(#px)"/><rect x="1534" y="273" width="53" height="2" fill="url(#ps)"/><rect x="1587" y="273" width="1" height="2" fill="url(#px)"/><rect x="1588" y="273" width="1" height="2" fill="url(#px)"/><rect x="1522" y="275" width="1" height="2" fill="url(#px)"/><rect x="1523" y="275" width="16" height="2" fill="url(#pt)"/><rect x="1539" y="275" width="1" height="2" fill="url(#px)"/><rect x="1540" y="275" width="9" height="2" fill="url(#px)"/><rect x="1549" y="275" width="2" height="2" fill="url(#px)"/><rect x="1551" y="275" width="16" height="2" fill="url(#pt)"/><rect x="1567" y="275" width="1" height="2" fill="url(#px)"/><rect x="1522" y="277" width="1" height="2" fill="url(#px)"/><rect x="1523" y="277" width="16" height="2" fill="url(#pt)"/><rect x="1539" y="277" width="1" height="2" fill="url(#px)"/><rect x="1540" y="277" width="7" height="2" fill="url(#px)"/><rect x="1548" y="277" width="9" height="2" fill="url(#px)"/><rect x="1558" y="277" width="4" height="2" fill="url(#px)"/><rect x="1562" y="277" width="2" height="2" fill="url(#px)"/><rect x="1564" y="277" width="16" height="2" fill="url(#pt)"/><rect x="1580" y="277" width="1" height="2" fill="url(#px)"/><rect x="1518" y="279" width="2" height="2" fill="url(#px)"/><rect x="1520" y="279" width="14" height="2" fill="url(#pt)"/><rect x="1534" y="279" width="1" height="2" fill="url(#px)"/><rect x="1518" y="281" width="1" height="2" fill="url(#px)"/><rect x="1519" y="281" width="14" height="2" fill="url(#pt)"/><rect x="1522" y="283" width="3" height="2" fill="url(#pa)"/><rect x="1525" y="283" width="1" height="2" fill="url(#px)"/><rect x="1526" y="283" width="1" height="2" fill="url(#px)"/><rect x="1527" y="283" width="77" height="2" fill="url(#ps)"/><rect x="1604" y="283" width="1" height="2" fill="url(#px)"/><rect x="1522" y="285" width="10" height="2" fill="url(#pa)"/><rect x="1532" y="285" width="1" height="2" fill="url(#px)"/><rect x="1533" y="285" width="1" height="2" fill="url(#px)"/><rect x="1534" y="285" width="53" height="2" fill="url(#ps)"/><rect x="1587" y="285" width="1" height="2" fill="url(#px)"/><rect x="1588" y="285" width="1" height="2" fill="url(#px)"/><rect x="1522" y="287" width="1" height="2" fill="url(#px)"/><rect x="1523" y="287" width="16" height="2" fill="url(#pt)"/><rect x="1539" y="287" width="1" height="2" fill="url(#px)"/><rect x="1540" y="287" width="3" height="2" fill="url(#px)"/><rect x="1544" y="287" width="3" height="2" fill="url(#px)"/><rect x="1548" y="287" width="8" height="2" fill="url(#px)"/><rect x="1557" y="287" width="4" height="2" fill="url(#px)"/><rect x="1562" y="287" width="2" height="2" fill="url(#px)"/><rect x="1564" y="287" width="16" height="2" fill="url(#pt)"/><rect x="1580" y="287" width="1" height="2" fill="url(#px)"/><rect x="1522" y="289" width="1" height="2" fill="url(#px)"/><rect x="1523" y="289" width="16" height="2" fill="url(#pt)"/><rect x="1539" y="289" width="1" height="2" fill="url(#px)"/><rect x="1540" y="289" width="7" height="2" fill="url(#px)"/><rect x="1548" y="289" width="4" height="2" fill="url(#px)"/><rect x="1553" y="289" width="9" height="2" fill="url(#px)"/><rect x="1563" y="289" width="8" height="2" fill="url(#px)"/><rect x="1572" y="289" width="2" height="2" fill="url(#px)"/><rect x="1575" y="289" width="3" height="2" fill="url(#px)"/><rect x="1579" y="289" width="7" height="2" fill="url(#px)"/><rect x="1587" y="289" width="7" height="2" fill="url(#px)"/><rect x="1595" y="289" width="7" height="2" fill="url(#px)"/><rect x="1526" y="291" width="9" height="2" fill="url(#px)"/><rect x="1536" y="291" width="7" height="2" fill="url(#px)"/><rect x="1543" y="291" width="2" height="2" fill="url(#px)"/><rect x="1545" y="291" width="16" height="2" fill="url(#pt)"/><rect x="1561" y="291" width="1" height="2" fill="url(#px)"/><rect x="1518" y="293" width="2" height="2" fill="url(#px)"/><rect x="1520" y="293" width="14" height="2" fill="url(#pt)"/><rect x="1534" y="293" width="1" height="2" fill="url(#px)"/><rect x="1518" y="295" width="1" height="2" fill="url(#px)"/><rect x="1519" y="295" width="14" height="2" fill="url(#pt)"/><rect x="1522" y="297" width="3" height="2" fill="url(#pa)"/><rect x="1525" y="297" width="1" height="2" fill="url(#px)"/><rect x="1526" y="297" width="1" height="2" fill="url(#px)"/><rect x="1527" y="297" width="75" height="2" fill="url(#ps)"/><rect x="1602" y="297" width="1" height="2" fill="url(#px)"/><rect x="1522" y="299" width="10" height="2" fill="url(#pa)"/><rect x="1532" y="299" width="1" height="2" fill="url(#px)"/><rect x="1533" y="299" width="1" height="2" fill="url(#px)"/><rect x="1534" y="299" width="53" height="2" fill="url(#ps)"/><rect x="1587" y="299" width="1" height="2" fill="url(#px)"/><rect x="1588" y="299" width="1" height="2" fill="url(#px)"/><rect x="1522" y="301" width="1" height="2" fill="url(#px)"/><rect x="1523" y="301" width="16" height="2" fill="url(#pt)"/><rect x="1539" y="301" width="1" height="2" fill="url(#px)"/><rect x="1540" y="301" width="3" height="2" fill="url(#px)"/><rect x="1544" y="301" width="3" height="2" fill="url(#px)"/><rect x="1548" y="301" width="6" height="2" fill="url(#px)"/><rect x="1555" y="301" width="5" height="2" fill="url(#px)"/><rect x="1560" y="301" width="2" height="2" fill="url(#px)"/><rect x="1562" y="301" width="16" height="2" fill="url(#pt)"/><rect x="1578" y="301" width="1" height="2" fill="url(#px)"/><rect x="1522" y="303" width="1" height="2" fill="url(#px)"/><rect x="1523" y="303" width="16" height="2" fill="url(#pt)"/><rect x="1539" y="303" width="1" height="2" fill="url(#px)"/><rect x="1540" y="303" width="3" height="2" fill="url(#px)"/><rect x="1544" y="303" width="2" height="2" fill="url(#px)"/><rect x="1547" y="303" width="6" height="2" fill="url(#px)"/><rect x="1554" y="303" width="9" height="2" fill="url(#px)"/><rect x="1564" y="303" width="6" height="2" fill="url(#px)"/><rect x="1571" y="303" width="8" height="2" fill="url(#px)"/><rect x="1580" y="303" width="7" height="2" fill="url(#px)"/><rect x="1588" y="303" width="2" height="2" fill="url(#px)"/><rect x="1591" y="303" width="3" height="2" fill="url(#px)"/><rect x="1526" y="305" width="7" height="2" fill="url(#px)"/><rect x="1534" y="305" width="4" height="2" fill="url(#px)"/><rect x="1539" y="305" width="3" height="2" fill="url(#px)"/><rect x="1543" y="305" width="2" height="2" fill="url(#px)"/><rect x="1545" y="305" width="2" height="2" fill="url(#px)"/><rect x="1547" y="305" width="16" height="2" fill="url(#pt)"/><rect x="1563" y="305" width="1" height="2" fill="url(#px)"/><rect x="1518" y="307" width="2" height="2" fill="url(#px)"/><rect x="1520" y="307" width="14" height="2" fill="url(#pt)"/><rect x="1534" y="307" width="1" height="2" fill="url(#px)"/><rect x="1518" y="309" width="1" height="2" fill="url(#px)"/><rect x="1519" y="309" width="14" height="2" fill="url(#pt)"/><rect x="1534" y="309" width="3" height="2" fill="url(#pa)"/><rect x="1537" y="309" width="1" height="2" fill="url(#px)"/><rect x="1538" y="309" width="1" height="2" fill="url(#px)"/><rect x="1539" y="309" width="61" height="2" fill="url(#ps)"/><rect x="1600" y="309" width="1" height="2" fill="url(#px)"/><rect x="1522" y="311" width="10" height="2" fill="url(#pa)"/><rect x="1532" y="311" width="1" height="2" fill="url(#px)"/><rect x="1533" y="311" width="1" height="2" fill="url(#px)"/><rect x="1534" y="311" width="53" height="2" fill="url(#ps)"/><rect x="1587" y="311" width="1" height="2" fill="url(#px)"/><rect x="1588" y="311" width="1" height="2" fill="url(#px)"/><rect x="1522" y="313" width="1" height="2" fill="url(#px)"/><rect x="1523" y="313" width="16" height="2" fill="url(#pt)"/><rect x="1539" y="313" width="1" height="2" fill="url(#px)"/><rect x="1540" y="313" width="2" height="2" fill="url(#px)"/><rect x="1543" y="313" width="5" height="2" fill="url(#px)"/><rect x="1549" y="313" width="6" height="2" fill="url(#px)"/><rect x="1556" y="313" width="2" height="2" fill="url(#px)"/><rect x="1558" y="313" width="16" height="2" fill="url(#pt)"/><rect x="1574" y="313" width="1" height="2" fill="url(#px)"/><rect x="1522" y="315" width="1" height="2" fill="url(#px)"/><rect x="1523" y="315" width="16" height="2" fill="url(#pt)"/><rect x="1539" y="315" width="1" height="2" fill="url(#px)"/><rect x="1540" y="315" width="4" height="2" fill="url(#px)"/><rect x="1545" y="315" width="5" height="2" fill="url(#px)"/><rect x="1551" y="315" width="8" height="2" fill="url(#px)"/><rect x="1560" y="315" width="8" height="2" fill="url(#px)"/><rect x="1569" y="315" width="9" height="2" fill="url(#px)"/><rect x="1579" y="315" width="3" height="2" fill="url(#px)"/><rect x="1583" y="315" width="4" height="2" fill="url(#px)"/><rect x="1588" y="315" width="9" height="2" fill="url(#px)"/><rect x="1598" y="315" width="2" height="2" fill="url(#px)"/><rect x="1526" y="317" width="6" height="2" fill="url(#px)"/><rect x="1533" y="317" width="4" height="2" fill="url(#px)"/><rect x="1538" y="317" width="8" height="2" fill="url(#px)"/><rect x="1547" y="317" width="6" height="2" fill="url(#px)"/><rect x="1554" y="317" width="2" height="2" fill="url(#px)"/><rect x="1556" y="317" width="2" height="2" fill="url(#px)"/><rect x="1558" y="317" width="16" height="2" fill="url(#pt)"/><rect x="1574" y="317" width="1" height="2" fill="url(#px)"/><rect x="1518" y="319" width="2" height="2" fill="url(#px)"/><rect x="1520" y="319" width="14" height="2" fill="url(#pt)"/><rect x="1534" y="319" width="1" height="2" fill="url(#px)"/><rect x="1518" y="321" width="1" height="2" fill="url(#px)"/><rect x="1519" y="321" width="14" height="2" fill="url(#pt)"/><rect x="1534" y="321" width="3" height="2" fill="url(#pa)"/><rect x="1537" y="321" width="1" height="2" fill="url(#px)"/><rect x="1538" y="321" width="1" height="2" fill="url(#px)"/><rect x="1539" y="321" width="53" height="2" fill="url(#ps)"/><rect x="1592" y="321" width="1" height="2" fill="url(#px)"/><rect x="1522" y="323" width="10" height="2" fill="url(#pa)"/><rect x="1532" y="323" width="1" height="2" fill="url(#px)"/><rect x="1533" y="323" width="1" height="2" fill="url(#px)"/><rect x="1534" y="323" width="53" height="2" fill="url(#ps)"/><rect x="1587" y="323" width="1" height="2" fill="url(#px)"/><rect x="1588" y="323" width="1" height="2" fill="url(#px)"/><rect x="1522" y="325" width="1" height="2" fill="url(#px)"/><rect x="1523" y="325" width="16" height="2" fill="url(#pt)"/><rect x="1539" y="325" width="1" height="2" fill="url(#px)"/><rect x="1540" y="325" width="7" height="2" fill="url(#px)"/><rect x="1547" y="325" width="2" height="2" fill="url(#px)"/><rect x="1549" y="325" width="16" height="2" fill="url(#pt)"/><rect x="1565" y="325" width="1" height="2" fill="url(#px)"/><rect x="1522" y="327" width="1" height="2" fill="url(#px)"/><rect x="1523" y="327" width="16" height="2" fill="url(#pt)"/><rect x="1539" y="327" width="1" height="2" fill="url(#px)"/><rect x="1540" y="327" width="8" height="2" fill="url(#px)"/><rect x="1549" y="327" width="5" height="2" fill="url(#px)"/><rect x="1555" y="327" width="4" height="2" fill="url(#px)"/><rect x="1560" y="327" width="3" height="2" fill="url(#px)"/><rect x="1564" y="327" width="4" height="2" fill="url(#px)"/><rect x="1569" y="327" width="4" height="2" fill="url(#px)"/><rect x="1573" y="327" width="2" height="2" fill="url(#px)"/><rect x="1575" y="327" width="16" height="2" fill="url(#pt)"/><rect x="1591" y="327" width="1" height="2" fill="url(#px)"/><rect x="1518" y="329" width="2" height="2" fill="url(#px)"/><rect x="1520" y="329" width="14" height="2" fill="url(#pt)"/><rect x="1534" y="329" width="1" height="2" fill="url(#px)"/><rect x="1518" y="331" width="1" height="2" fill="url(#px)"/><rect x="1519" y="331" width="14" height="2" fill="url(#pt)"/><rect x="1534" y="331" width="3" height="2" fill="url(#pa)"/><rect x="1537" y="331" width="1" height="2" fill="url(#px)"/><rect x="1538" y="331" width="1" height="2" fill="url(#px)"/><rect x="1539" y="331" width="61" height="2" fill="url(#ps)"/><rect x="1600" y="331" width="1" height="2" fill="url(#px)"/><rect x="1522" y="333" width="10" height="2" fill="url(#pa)"/><rect x="1532" y="333" width="1" height="2" fill="url(#px)"/><rect x="1533" y="333" width="1" height="2" fill="url(#px)"/><rect x="1534" y="333" width="53" height="2" fill="url(#ps)"/><rect x="1587" y="333" width="1" height="2" fill="url(#px)"/><rect x="1588" y="333" width="1" height="2" fill="url(#px)"/><rect x="1522" y="335" width="1" height="2" fill="url(#px)"/><rect x="1523" y="335" width="16" height="2" fill="url(#pt)"/><rect x="1539" y="335" width="1" height="2" fill="url(#px)"/><rect x="1540" y="335" width="5" height="2" fill="url(#px)"/><rect x="1546" y="335" width="5" height="2" fill="url(#px)"/><rect x="1552" y="335" width="2" height="2" fill="url(#px)"/><rect x="1555" y="335" width="2" height="2" fill="url(#px)"/><rect x="1557" y="335" width="16" height="2" fill="url(#pt)"/><rect x="1573" y="335" width="1" height="2" fill="url(#px)"/><rect x="1522" y="337" width="1" height="2" fill="url(#px)"/><rect x="1523" y="337" width="16" height="2" fill="url(#pt)"/><rect x="1539" y="337" width="1" height="2" fill="url(#px)"/><rect x="1540" y="337" width="9" height="2" fill="url(#px)"/><rect x="1550" y="337" width="4" height="2" fill="url(#px)"/><rect x="1555" y="337" width="6" height="2" fill="url(#px)"/><rect x="1562" y="337" width="6" height="2" fill="url(#px)"/><rect x="1569" y="337" width="2" height="2" fill="url(#px)"/><rect x="1571" y="337" width="2" height="2" fill="url(#px)"/><rect x="1573" y="337" width="16" height="2" fill="url(#pt)"/><rect x="1589" y="337" width="1" height="2" fill="url(#px)"/><rect x="1518" y="339" width="2" height="2" fill="url(#px)"/><rect x="1520" y="339" width="14" height="2" fill="url(#pt)"/><rect x="1534" y="339" width="1" height="2" fill="url(#px)"/><rect x="1518" y="341" width="1" height="2" fill="url(#px)"/><rect x="1519" y="341" width="14" height="2" fill="url(#pt)"/><rect x="1534" y="341" width="3" height="2" fill="url(#pa)"/><rect x="1537" y="341" width="1" height="2" fill="url(#px)"/><rect x="1538" y="341" width="1" height="2" fill="url(#px)"/><rect x="1539" y="341" width="65" height="2" fill="url(#ps)"/><rect x="1604" y="341" width="1" height="2" fill="url(#px)"/><rect x="1522" y="343" width="10" height="2" fill="url(#pa)"/><rect x="1532" y="343" width="1" height="2" fill="url(#px)"/><rect x="1533" y="343" width="1" height="2" fill="url(#px)"/><rect x="1534" y="343" width="53" height="2" fill="url(#ps)"/><rect x="1587" y="343" width="1" height="2" fill="url(#px)"/><rect x="1588" y="343" width="1" height="2" fill="url(#px)"/><rect x="1522" y="345" width="1" height="2" fill="url(#px)"/><rect x="1523" y="345" width="16" height="2" fill="url(#pt)"/><rect x="1539" y="345" width="1" height="2" fill="url(#px)"/><rect x="1540" y="345" width="4" height="2" fill="url(#px)"/><rect x="1544" y="345" width="2" height="2" fill="url(#px)"/><rect x="1546" y="345" width="16" height="2" fill="url(#pt)"/><rect x="1562" y="345" width="1" height="2" fill="url(#px)"/><rect x="1522" y="347" width="1" height="2" fill="url(#px)"/><rect x="1523" y="347" width="16" height="2" fill="url(#pt)"/><rect x="1539" y="347" width="1" height="2" fill="url(#px)"/><rect x="1540" y="347" width="8" height="2" fill="url(#px)"/><rect x="1549" y="347" width="7" height="2" fill="url(#px)"/><rect x="1557" y="347" width="7" height="2" fill="url(#px)"/><rect x="1565" y="347" width="1" height="2" fill="url(#px)"/><rect x="1566" y="347" width="2" height="2" fill="url(#px)"/><rect x="1568" y="347" width="16" height="2" fill="url(#pt)"/><rect x="1584" y="347" width="1" height="2" fill="url(#px)"/><rect x="1518" y="349" width="2" height="2" fill="url(#px)"/><rect x="1520" y="349" width="14" height="2" fill="url(#pt)"/><rect x="1534" y="349" width="1" height="2" fill="url(#px)"/><rect x="1518" y="351" width="1" height="2" fill="url(#px)"/><rect x="1519" y="351" width="14" height="2" fill="url(#pt)"/><rect x="1534" y="351" width="3" height="2" fill="url(#pa)"/><rect x="1537" y="351" width="1" height="2" fill="url(#px)"/><rect x="1538" y="351" width="1" height="2" fill="url(#px)"/><rect x="1539" y="351" width="62" height="2" fill="url(#ps)"/><rect x="1601" y="351" width="1" height="2" fill="url(#px)"/><rect x="1522" y="353" width="10" height="2" fill="url(#pa)"/><rect x="1532" y="353" width="1" height="2" fill="url(#px)"/><rect x="1533" y="353" width="1" height="2" fill="url(#px)"/><rect x="1534" y="353" width="53" height="2" fill="url(#ps)"/><rect x="1587" y="353" width="1" height="2" fill="url(#px)"/><rect x="1588" y="353" width="1" height="2" fill="url(#px)"/><rect x="1522" y="355" width="1" height="2" fill="url(#px)"/><rect x="1523" y="355" width="16" height="2" fill="url(#pt)"/><rect x="1539" y="355" width="1" height="2" fill="url(#px)"/><rect x="1540" y="355" width="2" height="2" fill="url(#px)"/><rect x="1543" y="355" width="2" height="2" fill="url(#px)"/><rect x="1545" y="355" width="2" height="2" fill="url(#px)"/><rect x="1547" y="355" width="16" height="2" fill="url(#pt)"/><rect x="1563" y="355" width="1" height="2" fill="url(#px)"/><rect x="1522" y="357" width="1" height="2" fill="url(#px)"/><rect x="1523" y="357" width="16" height="2" fill="url(#pt)"/><rect x="1539" y="357" width="1" height="2" fill="url(#px)"/><rect x="1540" y="357" width="8" height="2" fill="url(#px)"/><rect x="1549" y="357" width="8" height="2" fill="url(#px)"/><rect x="1558" y="357" width="1" height="2" fill="url(#px)"/><rect x="1559" y="357" width="2" height="2" fill="url(#px)"/><rect x="1561" y="357" width="16" height="2" fill="url(#pt)"/><rect x="1577" y="357" width="1" height="2" fill="url(#px)"/><rect x="1518" y="359" width="2" height="2" fill="url(#px)"/><rect x="1520" y="359" width="14" height="2" fill="url(#pt)"/><rect x="1534" y="359" width="1" height="2" fill="url(#px)"/><rect x="1518" y="361" width="1" height="2" fill="url(#px)"/><rect x="1519" y="361" width="14" height="2" fill="url(#pt)"/><rect x="1534" y="361" width="3" height="2" fill="url(#pa)"/><rect x="1537" y="361" width="1" height="2" fill="url(#px)"/><rect x="1538" y="361" width="1" height="2" fill="url(#px)"/><rect x="1539" y="361" width="56" height="2" fill="url(#ps)"/><rect x="1595" y="361" width="1" height="2" fill="url(#px)"/><rect x="1522" y="363" width="10" height="2" fill="url(#pa)"/><rect x="1532" y="363" width="1" height="2" fill="url(#px)"/><rect x="1533" y="363" width="1" height="2" fill="url(#px)"/><rect x="1534" y="363" width="53" height="2" fill="url(#ps)"/><rect x="1587" y="363" width="1" height="2" fill="url(#px)"/><rect x="1588" y="363" width="1" height="2" fill="url(#px)"/><rect x="1522" y="365" width="1" height="2" fill="url(#px)"/><rect x="1523" y="365" width="16" height="2" fill="url(#pt)"/><rect x="1539" y="365" width="1" height="2" fill="url(#px)"/><rect x="1540" y="365" width="8" height="2" fill="url(#px)"/><rect x="1549" y="365" width="3" height="2" fill="url(#px)"/><rect x="1553" y="365" width="7" height="2" fill="url(#px)"/><rect x="1560" y="365" width="2" height="2" fill="url(#px)"/><rect x="1562" y="365" width="16" height="2" fill="url(#pt)"/><rect x="1578" y="365" width="1" height="2" fill="url(#px)"/><rect x="1522" y="367" width="1" height="2" fill="url(#px)"/><rect x="1523" y="367" width="16" height="2" fill="url(#pt)"/><rect x="1539" y="367" width="1" height="2" fill="url(#px)"/><rect x="1540" y="367" width="8" height="2" fill="url(#px)"/><rect x="1549" y="367" width="2" height="2" fill="url(#px)"/><rect x="1552" y="367" width="5" height="2" fill="url(#px)"/><rect x="1558" y="367" width="3" height="2" fill="url(#px)"/><rect x="1562" y="367" width="5" height="2" fill="url(#px)"/><rect x="1568" y="367" width="9" height="2" fill="url(#px)"/><rect x="1578" y="367" width="4" height="2" fill="url(#px)"/><rect x="1583" y="367" width="3" height="2" fill="url(#px)"/><rect x="1587" y="367" width="3" height="2" fill="url(#px)"/><rect x="1590" y="367" width="2" height="2" fill="url(#px)"/><rect x="1592" y="367" width="16" height="2" fill="url(#pt)"/><rect x="1608" y="367" width="1" height="2" fill="url(#px)"/><rect x="1518" y="369" width="2" height="2" fill="url(#px)"/><rect x="1520" y="369" width="14" height="2" fill="url(#pt)"/><rect x="1534" y="369" width="1" height="2" fill="url(#px)"/><rect x="1518" y="371" width="1" height="2" fill="url(#px)"/><rect x="1519" y="371" width="14" height="2" fill="url(#pt)"/><rect x="1534" y="371" width="3" height="2" fill="url(#pa)"/><rect x="1537" y="371" width="1" height="2" fill="url(#px)"/><rect x="1538" y="371" width="1" height="2" fill="url(#px)"/><rect x="1539" y="371" width="65" height="2" fill="url(#ps)"/><rect x="1604" y="371" width="1" height="2" fill="url(#px)"/><rect x="1522" y="373" width="10" height="2" fill="url(#pa)"/><rect x="1532" y="373" width="1" height="2" fill="url(#px)"/><rect x="1533" y="373" width="1" height="2" fill="url(#px)"/><rect x="1534" y="373" width="53" height="2" fill="url(#ps)"/><rect x="1587" y="373" width="1" height="2" fill="url(#px)"/><rect x="1588" y="373" width="1" height="2" fill="url(#px)"/><rect x="1522" y="375" width="1" height="2" fill="url(#px)"/><rect x="1523" y="375" width="16" height="2" fill="url(#pt)"/><rect x="1539" y="375" width="1" height="2" fill="url(#px)"/><rect x="1540" y="375" width="2" height="2" fill="url(#px)"/><rect x="1543" y="375" width="3" height="2" fill="url(#px)"/><rect x="1547" y="375" width="2" height="2" fill="url(#px)"/><rect x="1550" y="375" width="4" height="2" fill="url(#px)"/><rect x="1555" y="375" width="3" height="2" fill="url(#px)"/><rect x="1559" y="375" width="7" height="2" fill="url(#px)"/><rect x="1567" y="375" width="2" height="2" fill="url(#px)"/><rect x="1570" y="375" width="1" height="2" fill="url(#px)"/><rect x="1571" y="375" width="2" height="2" fill="url(#px)"/><rect x="1573" y="375" width="16" height="2" fill="url(#pt)"/><rect x="1589" y="375" width="1" height="2" fill="url(#px)"/><rect x="1522" y="377" width="1" height="2" fill="url(#px)"/><rect x="1523" y="377" width="16" height="2" fill="url(#pt)"/><rect x="1539" y="377" width="1" height="2" fill="url(#px)"/><rect x="1540" y="377" width="5" height="2" fill="url(#px)"/><rect x="1546" y="377" width="8" height="2" fill="url(#px)"/><rect x="1555" y="377" width="4" height="2" fill="url(#px)"/><rect x="1560" y="377" width="6" height="2" fill="url(#px)"/><rect x="1567" y="377" width="7" height="2" fill="url(#px)"/><rect x="1575" y="377" width="7" height="2" fill="url(#px)"/><rect x="1583" y="377" width="9" height="2" fill="url(#px)"/><rect x="1593" y="377" width="3" height="2" fill="url(#px)"/><rect x="1597" y="377" width="3" height="2" fill="url(#px)"/><rect x="1601" y="377" width="2" height="2" fill="url(#px)"/><rect x="1526" y="379" width="9" height="2" fill="url(#px)"/><rect x="1535" y="379" width="2" height="2" fill="url(#px)"/><rect x="1537" y="379" width="16" height="2" fill="url(#pt)"/><rect x="1553" y="379" width="1" height="2" fill="url(#px)"/><rect x="1518" y="381" width="2" height="2" fill="url(#px)"/><rect x="1520" y="381" width="14" height="2" fill="url(#pt)"/><rect x="1534" y="381" width="1" height="2" fill="url(#px)"/><rect x="1518" y="383" width="1" height="2" fill="url(#px)"/><rect x="1519" y="383" width="14" height="2" fill="url(#pt)"/><rect x="1534" y="383" width="3" height="2" fill="url(#pa)"/><rect x="1537" y="383" width="1" height="2" fill="url(#px)"/><rect x="1538" y="383" width="1" height="2" fill="url(#px)"/><rect x="1539" y="383" width="54" height="2" fill="url(#ps)"/><rect x="1593" y="383" width="1" height="2" fill="url(#px)"/><rect x="1522" y="385" width="10" height="2" fill="url(#pa)"/><rect x="1532" y="385" width="1" height="2" fill="url(#px)"/><rect x="1533" y="385" width="1" height="2" fill="url(#px)"/><rect x="1534" y="385" width="53" height="2" fill="url(#ps)"/><rect x="1587" y="385" width="1" height="2" fill="url(#px)"/><rect x="1588" y="385" width="1" height="2" fill="url(#px)"/><rect x="1522" y="387" width="1" height="2" fill="url(#px)"/><rect x="1523" y="387" width="16" height="2" fill="url(#pt)"/><rect x="1539" y="387" width="1" height="2" fill="url(#px)"/><rect x="1540" y="387" width="9" height="2" fill="url(#px)"/><rect x="1550" y="387" width="9" height="2" fill="url(#px)"/><rect x="1560" y="387" width="6" height="2" fill="url(#px)"/><rect x="1567" y="387" width="2" height="2" fill="url(#px)"/><rect x="1569" y="387" width="2" height="2" fill="url(#px)"/><rect x="1571" y="387" width="16" height="2" fill="url(#pt)"/><rect x="1587" y="387" width="1" height="2" fill="url(#px)"/><rect x="1522" y="389" width="1" height="2" fill="url(#px)"/><rect x="1523" y="389" width="16" height="2" fill="url(#pt)"/><rect x="1539" y="389" width="1" height="2" fill="url(#px)"/><rect x="1540" y="389" width="4" height="2" fill="url(#px)"/><rect x="1545" y="389" width="3" height="2" fill="url(#px)"/><rect x="1549" y="389" width="7" height="2" fill="url(#px)"/><rect x="1557" y="389" width="6" height="2" fill="url(#px)"/><rect x="1564" y="389" width="9" height="2" fill="url(#px)"/><rect x="1574" y="389" width="4" height="2" fill="url(#px)"/><rect x="1579" y="389" width="2" height="2" fill="url(#px)"/><rect x="1582" y="389" width="5" height="2" fill="url(#px)"/><rect x="1588" y="389" width="7" height="2" fill="url(#px)"/><rect x="1596" y="389" width="2" height="2" fill="url(#px)"/><rect x="1598" y="389" width="2" height="2" fill="url(#px)"/><rect x="1600" y="389" width="16" height="2" fill="url(#pt)"/><rect x="1616" y="389" width="1" height="2" fill="url(#px)"/><rect x="1518" y="391" width="2" height="2" fill="url(#px)"/><rect x="1520" y="391" width="14" height="2" fill="url(#pt)"/><rect x="1534" y="391" width="1" height="2" fill="url(#px)"/><rect x="1518" y="393" width="1" height="2" fill="url(#px)"/><rect x="1519" y="393" width="14" height="2" fill="url(#pt)"/><rect x="1534" y="393" width="3" height="2" fill="url(#pa)"/><rect x="1537" y="393" width="1" height="2" fill="url(#px)"/><rect x="1538" y="393" width="1" height="2" fill="url(#px)"/><rect x="1539" y="393" width="47" height="2" fill="url(#ps)"/><rect x="1586" y="393" width="1" height="2" fill="url(#px)"/><rect x="1522" y="395" width="10" height="2" fill="url(#pa)"/><rect x="1532" y="395" width="1" height="2" fill="url(#px)"/><rect x="1533" y="395" width="1" height="2" fill="url(#px)"/><rect x="1534" y="395" width="53" height="2" fill="url(#ps)"/><rect x="1587" y="395" width="1" height="2" fill="url(#px)"/><rect x="1588" y="395" width="1" height="2" fill="url(#px)"/><rect x="1522" y="397" width="1" height="2" fill="url(#px)"/><rect x="1523" y="397" width="16" height="2" fill="url(#pt)"/><rect x="1539" y="397" width="1" height="2" fill="url(#px)"/><rect x="1540" y="397" width="2" height="2" fill="url(#px)"/><rect x="1543" y="397" width="6" height="2" fill="url(#px)"/><rect x="1550" y="397" width="3" height="2" fill="url(#px)"/><rect x="1554" y="397" width="4" height="2" fill="url(#px)"/><rect x="1558" y="397" width="2" height="2" fill="url(#px)"/><rect x="1560" y="397" width="16" height="2" fill="url(#pt)"/><rect x="1576" y="397" width="1" height="2" fill="url(#px)"/><rect x="1522" y="399" width="1" height="2" fill="url(#px)"/><rect x="1523" y="399" width="16" height="2" fill="url(#pt)"/><rect x="1539" y="399" width="1" height="2" fill="url(#px)"/><rect x="1540" y="399" width="7" height="2" fill="url(#px)"/><rect x="1548" y="399" width="4" height="2" fill="url(#px)"/><rect x="1553" y="399" width="7" height="2" fill="url(#px)"/><rect x="1561" y="399" width="5" height="2" fill="url(#px)"/><rect x="1567" y="399" width="7" height="2" fill="url(#px)"/><rect x="1575" y="399" width="5" height="2" fill="url(#px)"/><rect x="1581" y="399" width="5" height="2" fill="url(#px)"/><rect x="1587" y="399" width="5" height="2" fill="url(#px)"/><rect x="1593" y="399" width="5" height="2" fill="url(#px)"/><rect x="1598" y="399" width="2" height="2" fill="url(#px)"/><rect x="1600" y="399" width="16" height="2" fill="url(#pt)"/><rect x="1616" y="399" width="1" height="2" fill="url(#px)"/><rect x="1518" y="401" width="2" height="2" fill="url(#px)"/><rect x="1520" y="401" width="14" height="2" fill="url(#pt)"/><rect x="1534" y="401" width="1" height="2" fill="url(#px)"/><rect x="1518" y="403" width="1" height="2" fill="url(#px)"/><rect x="1519" y="403" width="14" height="2" fill="url(#pt)"/><rect x="1534" y="403" width="3" height="2" fill="url(#pa)"/><rect x="1537" y="403" width="1" height="2" fill="url(#px)"/><rect x="1538" y="403" width="1" height="2" fill="url(#px)"/><rect x="1539" y="403" width="60" height="2" fill="url(#ps)"/><rect x="1599" y="403" width="1" height="2" fill="url(#px)"/><rect x="1522" y="405" width="10" height="2" fill="url(#pa)"/><rect x="1532" y="405" width="1" height="2" fill="url(#px)"/><rect x="1533" y="405" width="1" height="2" fill="url(#px)"/><rect x="1534" y="405" width="53" height="2" fill="url(#ps)"/><rect x="1587" y="405" width="1" height="2" fill="url(#px)"/><rect x="1588" y="405" width="1" height="2" fill="url(#px)"/><rect x="1522" y="407" width="1" height="2" fill="url(#px)"/><rect x="1523" y="407" width="16" height="2" fill="url(#pt)"/><rect x="1539" y="407" width="1" height="2" fill="url(#px)"/><rect x="1540" y="407" width="5" height="2" fill="url(#px)"/><rect x="1546" y="407" width="3" height="2" fill="url(#px)"/><rect x="1549" y="407" width="2" height="2" fill="url(#px)"/><rect x="1551" y="407" width="16" height="2" fill="url(#pt)"/><rect x="1567" y="407" width="1" height="2" fill="url(#px)"/><rect x="1522" y="409" width="1" height="2" fill="url(#px)"/><rect x="1523" y="409" width="16" height="2" fill="url(#pt)"/><rect x="1539" y="409" width="1" height="2" fill="url(#px)"/><rect x="1540" y="409" width="9" height="2" fill="url(#px)"/><rect x="1550" y="409" width="7" height="2" fill="url(#px)"/><rect x="1558" y="409" width="2" height="2" fill="url(#px)"/><rect x="1561" y="409" width="2" height="2" fill="url(#px)"/><rect x="1564" y="409" width="6" height="2" fill="url(#px)"/><rect x="1571" y="409" width="9" height="2" fill="url(#px)"/><rect x="1581" y="409" width="6" height="2" fill="url(#px)"/><rect x="1588" y="409" width="5" height="2" fill="url(#px)"/><rect x="1594" y="409" width="1" height="2" fill="url(#px)"/><rect x="1595" y="409" width="2" height="2" fill="url(#px)"/><rect x="1597" y="409" width="16" height="2" fill="url(#pt)"/><rect x="1613" y="409" width="1" height="2" fill="url(#px)"/><rect x="1518" y="411" width="2" height="2" fill="url(#px)"/><rect x="1520" y="411" width="14" height="2" fill="url(#pt)"/><rect x="1534" y="411" width="1" height="2" fill="url(#px)"/><rect x="1518" y="413" width="1" height="2" fill="url(#px)"/><rect x="1519" y="413" width="14" height="2" fill="url(#pt)"/><rect x="1534" y="413" width="3" height="2" fill="url(#pa)"/><rect x="1537" y="413" width="1" height="2" fill="url(#px)"/><rect x="1538" y="413" width="1" height="2" fill="url(#px)"/><rect x="1539" y="413" width="60" height="2" fill="url(#ps)"/><rect x="1599" y="413" width="1" height="2" fill="url(#px)"/><rect x="1522" y="415" width="10" height="2" fill="url(#pa)"/><rect x="1532" y="415" width="1" height="2" fill="url(#px)"/><rect x="1533" y="415" width="1" height="2" fill="url(#px)"/><rect x="1534" y="415" width="53" height="2" fill="url(#ps)"/><rect x="1587" y="415" width="1" height="2" fill="url(#px)"/><rect x="1588" y="415" width="1" height="2" fill="url(#px)"/><rect x="1522" y="417" width="1" height="2" fill="url(#px)"/><rect x="1523" y="417" width="16" height="2" fill="url(#pt)"/><rect x="1539" y="417" width="1" height="2" fill="url(#px)"/><rect x="1540" y="417" width="9" height="2" fill="url(#px)"/><rect x="1550" y="417" width="7" height="2" fill="url(#px)"/><rect x="1558" y="417" width="2" height="2" fill="url(#px)"/><rect x="1560" y="417" width="2" height="2" fill="url(#px)"/><rect x="1562" y="417" width="16" height="2" fill="url(#pt)"/><rect x="1578" y="417" width="1" height="2" fill="url(#px)"/><rect x="1522" y="419" width="1" height="2" fill="url(#px)"/><rect x="1523" y="419" width="16" height="2" fill="url(#pt)"/><rect x="1539" y="419" width="1" height="2" fill="url(#px)"/><rect x="1540" y="419" width="3" height="2" fill="url(#px)"/><rect x="1544" y="419" width="5" height="2" fill="url(#px)"/><rect x="1550" y="419" width="3" height="2" fill="url(#px)"/><rect x="1554" y="419" width="5" height="2" fill="url(#px)"/><rect x="1560" y="419" width="9" height="2" fill="url(#px)"/><rect x="1570" y="419" width="5" height="2" fill="url(#px)"/><rect x="1576" y="419" width="7" height="2" fill="url(#px)"/><rect x="1584" y="419" width="5" height="2" fill="url(#px)"/><rect x="1590" y="419" width="9" height="2" fill="url(#px)"/><rect x="1600" y="419" width="2" height="2" fill="url(#px)"/><rect x="1603" y="419" width="2" height="2" fill="url(#px)"/><rect x="1526" y="421" width="7" height="2" fill="url(#px)"/><rect x="1534" y="421" width="3" height="2" fill="url(#px)"/><rect x="1537" y="421" width="2" height="2" fill="url(#px)"/><rect x="1539" y="421" width="16" height="2" fill="url(#pt)"/><rect x="1555" y="421" width="1" height="2" fill="url(#px)"/><rect x="1518" y="423" width="2" height="2" fill="url(#px)"/><rect x="1520" y="423" width="14" height="2" fill="url(#pt)"/><rect x="1534" y="423" width="1" height="2" fill="url(#px)"/><rect x="1514" y="425" width="2" height="2" fill="url(#px)"/><rect x="1516" y="425" width="21" height="2" fill="url(#pt)"/><rect x="1537" y="425" width="1" height="2" fill="url(#px)"/><rect x="1514" y="427" width="1" height="2" fill="url(#px)"/><rect x="1515" y="427" width="32" height="2" fill="url(#pt)"/><rect x="1547" y="427" width="1" height="2" fill="url(#px)"/><rect x="1518" y="429" width="1" height="2" fill="url(#px)"/><rect x="1519" y="429" width="21" height="2" fill="url(#pt)"/><rect x="1541" y="429" width="9" height="2" fill="url(#pa)"/><rect x="1550" y="429" width="1" height="2" fill="url(#px)"/><rect x="1551" y="429" width="1" height="2" fill="url(#px)"/><rect x="1552" y="429" width="36" height="2" fill="url(#ps)"/><rect x="1588" y="429" width="1" height="2" fill="url(#px)"/><rect x="1589" y="429" width="1" height="2" fill="url(#px)"/><rect x="1522" y="431" width="1" height="2" fill="url(#px)"/><rect x="1523" y="431" width="11" height="2" fill="url(#pt)"/><rect x="1534" y="431" width="1" height="2" fill="url(#px)"/><rect x="1526" y="433" width="76" height="2" fill="url(#px)"/><rect x="1602" y="433" width="2" height="2" fill="url(#px)"/><rect x="1604" y="433" width="11" height="2" fill="url(#pt)"/><rect x="1615" y="433" width="1" height="2" fill="url(#px)"/><rect x="1518" y="435" width="2" height="2" fill="url(#px)"/><rect x="1520" y="435" width="21" height="2" fill="url(#pt)"/><rect x="1541" y="435" width="1" height="2" fill="url(#px)"/><rect x="1514" y="437" width="2" height="2" fill="url(#px)"/><rect x="1516" y="437" width="32" height="2" fill="url(#pt)"/><rect x="1548" y="437" width="1" height="2" fill="url(#px)"/><rect x="1514" y="439" width="1" height="2" fill="url(#px)"/><rect x="1515" y="439" width="28" height="2" fill="url(#pt)"/><rect x="1543" y="439" width="1" height="2" fill="url(#px)"/><rect x="1518" y="441" width="1" height="2" fill="url(#px)"/><rect x="1519" y="441" width="21" height="2" fill="url(#pt)"/><rect x="1541" y="441" width="9" height="2" fill="url(#pa)"/><rect x="1550" y="441" width="1" height="2" fill="url(#px)"/><rect x="1551" y="441" width="1" height="2" fill="url(#px)"/><rect x="1552" y="441" width="36" height="2" fill="url(#ps)"/><rect x="1588" y="441" width="1" height="2" fill="url(#px)"/><rect x="1589" y="441" width="1" height="2" fill="url(#px)"/><rect x="1522" y="443" width="1" height="2" fill="url(#px)"/><rect x="1523" y="443" width="11" height="2" fill="url(#pt)"/><rect x="1534" y="443" width="1" height="2" fill="url(#px)"/><rect x="1526" y="445" width="76" height="2" fill="url(#px)"/><rect x="1602" y="445" width="2" height="2" fill="url(#px)"/><rect x="1604" y="445" width="11" height="2" fill="url(#pt)"/><rect x="1615" y="445" width="1" height="2" fill="url(#px)"/><rect x="1518" y="447" width="2" height="2" fill="url(#px)"/><rect x="1520" y="447" width="21" height="2" fill="url(#pt)"/><rect x="1541" y="447" width="1" height="2" fill="url(#px)"/><rect x="1514" y="449" width="2" height="2" fill="url(#px)"/><rect x="1516" y="449" width="28" height="2" fill="url(#pt)"/><rect x="1544" y="449" width="1" height="2" fill="url(#px)"/><rect x="1510" y="451" width="2" height="2" fill="url(#px)"/><rect x="1512" y="451" width="14" height="2" fill="url(#pt)"/><rect x="1526" y="451" width="1" height="2" fill="url(#px)"/><rect x="1510" y="453" width="1" height="2" fill="url(#px)"/><rect x="1511" y="453" width="14" height="2" fill="url(#pt)"/><rect x="1526" y="453" width="8" height="2" fill="url(#pa)"/><rect x="1534" y="453" width="1" height="2" fill="url(#px)"/><rect x="1535" y="453" width="1" height="2" fill="url(#px)"/><rect x="1536" y="453" width="26" height="2" fill="url(#ps)"/><rect x="1562" y="453" width="1" height="2" fill="url(#px)"/><rect x="1514" y="455" width="26" height="2" fill="url(#pa)"/><rect x="1540" y="455" width="1" height="2" fill="url(#px)"/><rect x="1541" y="455" width="1" height="2" fill="url(#px)"/><rect x="1542" y="455" width="50" height="2" fill="url(#ps)"/><rect x="1592" y="455" width="1" height="2" fill="url(#px)"/><rect x="1514" y="457" width="9" height="2" fill="url(#pa)"/><rect x="1523" y="457" width="1" height="2" fill="url(#px)"/><rect x="1524" y="457" width="1" height="2" fill="url(#px)"/><rect x="1525" y="457" width="41" height="2" fill="url(#ps)"/><rect x="1566" y="457" width="1" height="2" fill="url(#px)"/><rect x="1514" y="459" width="9" height="2" fill="url(#pa)"/><rect x="1523" y="459" width="1" height="2" fill="url(#px)"/><rect x="1524" y="459" width="1" height="2" fill="url(#px)"/><rect x="1525" y="459" width="50" height="2" fill="url(#ps)"/><rect x="1575" y="459" width="1" height="2" fill="url(#px)"/><rect x="1576" y="459" width="1" height="2" fill="url(#px)"/><rect x="1514" y="461" width="1" height="2" fill="url(#px)"/><rect x="1515" y="461" width="13" height="2" fill="url(#pt)"/><rect x="1529" y="461" width="3" height="2" fill="url(#pa)"/><rect x="1532" y="461" width="1" height="2" fill="url(#px)"/><rect x="1533" y="461" width="1" height="2" fill="url(#px)"/><rect x="1534" y="461" width="7" height="2" fill="url(#ps)"/><rect x="1541" y="461" width="1" height="2" fill="url(#px)"/><rect x="1542" y="461" width="1" height="2" fill="url(#px)"/><rect x="1518" y="463" width="1" height="2" fill="url(#px)"/><rect x="1519" y="463" width="7" height="2" fill="url(#pt)"/><rect x="1527" y="463" width="5" height="2" fill="url(#pa)"/><rect x="1532" y="463" width="1" height="2" fill="url(#px)"/><rect x="1533" y="463" width="1" height="2" fill="url(#px)"/><rect x="1534" y="463" width="34" height="2" fill="url(#ps)"/><rect x="1568" y="463" width="1" height="2" fill="url(#px)"/><rect x="1569" y="463" width="1" height="2" fill="url(#px)"/><rect x="1522" y="465" width="1" height="2" fill="url(#px)"/><rect x="1523" y="465" width="8" height="2" fill="url(#pt)"/><rect x="1531" y="465" width="1" height="2" fill="url(#px)"/><rect x="1526" y="467" width="1" height="2" fill="url(#px)"/><rect x="1527" y="467" width="15" height="2" fill="url(#pt)"/><rect x="1542" y="467" width="1" height="2" fill="url(#px)"/><rect x="1530" y="469" width="87" height="2" fill="url(#px)"/><rect x="1522" y="471" width="2" height="2" fill="url(#px)"/><rect x="1524" y="471" width="8" height="2" fill="url(#pt)"/><rect x="1532" y="471" width="1" height="2" fill="url(#px)"/><rect x="1518" y="473" width="2" height="2" fill="url(#px)"/><rect x="1520" y="473" width="7" height="2" fill="url(#pt)"/><rect x="1527" y="473" width="1" height="2" fill="url(#px)"/><rect x="1514" y="475" width="2" height="2" fill="url(#px)"/><rect x="1516" y="475" width="13" height="2" fill="url(#pt)"/><rect x="1529" y="475" width="1" height="2" fill="url(#px)"/><rect x="1514" y="477" width="1" height="2" fill="url(#px)"/><rect x="1515" y="477" width="16" height="2" fill="url(#pt)"/><rect x="1531" y="477" width="1" height="2" fill="url(#px)"/><rect x="1518" y="479" width="1" height="2" fill="url(#px)"/><rect x="1519" y="479" width="21" height="2" fill="url(#pt)"/><rect x="1541" y="479" width="9" height="2" fill="url(#pa)"/><rect x="1550" y="479" width="1" height="2" fill="url(#px)"/><rect x="1551" y="479" width="1" height="2" fill="url(#px)"/><rect x="1552" y="479" width="36" height="2" fill="url(#ps)"/><rect x="1588" y="479" width="1" height="2" fill="url(#px)"/><rect x="1589" y="479" width="1" height="2" fill="url(#px)"/><rect x="1522" y="481" width="1" height="2" fill="url(#px)"/><rect x="1523" y="481" width="11" height="2" fill="url(#pt)"/><rect x="1534" y="481" width="1" height="2" fill="url(#px)"/><rect x="1535" y="481" width="61" height="2" fill="url(#px)"/><rect x="1596" y="481" width="2" height="2" fill="url(#px)"/><rect x="1598" y="481" width="11" height="2" fill="url(#pt)"/><rect x="1609" y="481" width="1" height="2" fill="url(#px)"/><rect x="1518" y="483" width="2" height="2" fill="url(#px)"/><rect x="1520" y="483" width="21" height="2" fill="url(#pt)"/><rect x="1541" y="483" width="1" height="2" fill="url(#px)"/><rect x="1514" y="485" width="2" height="2" fill="url(#px)"/><rect x="1516" y="485" width="16" height="2" fill="url(#pt)"/><rect x="1532" y="485" width="1" height="2" fill="url(#px)"/><rect x="1514" y="487" width="1" height="2" fill="url(#px)"/><rect x="1515" y="487" width="30" height="2" fill="url(#pt)"/><rect x="1545" y="487" width="1" height="2" fill="url(#px)"/><rect x="1518" y="489" width="1" height="2" fill="url(#px)"/><rect x="1519" y="489" width="21" height="2" fill="url(#pt)"/><rect x="1541" y="489" width="9" height="2" fill="url(#pa)"/><rect x="1550" y="489" width="1" height="2" fill="url(#px)"/><rect x="1551" y="489" width="1" height="2" fill="url(#px)"/><rect x="1552" y="489" width="36" height="2" fill="url(#ps)"/><rect x="1588" y="489" width="1" height="2" fill="url(#px)"/><rect x="1589" y="489" width="1" height="2" fill="url(#px)"/><rect x="1522" y="491" width="1" height="2" fill="url(#px)"/><rect x="1523" y="491" width="11" height="2" fill="url(#pt)"/><rect x="1534" y="491" width="1" height="2" fill="url(#px)"/><rect x="1526" y="493" width="76" height="2" fill="url(#px)"/><rect x="1602" y="493" width="2" height="2" fill="url(#px)"/><rect x="1604" y="493" width="11" height="2" fill="url(#pt)"/><rect x="1615" y="493" width="1" height="2" fill="url(#px)"/><rect x="1518" y="495" width="2" height="2" fill="url(#px)"/><rect x="1520" y="495" width="21" height="2" fill="url(#pt)"/><rect x="1541" y="495" width="1" height="2" fill="url(#px)"/><rect x="1514" y="497" width="2" height="2" fill="url(#px)"/><rect x="1516" y="497" width="30" height="2" fill="url(#pt)"/><rect x="1546" y="497" width="1" height="2" fill="url(#px)"/><rect x="1514" y="499" width="1" height="2" fill="url(#px)"/><rect x="1515" y="499" width="28" height="2" fill="url(#pt)"/><rect x="1543" y="499" width="1" height="2" fill="url(#px)"/><rect x="1518" y="501" width="1" height="2" fill="url(#px)"/><rect x="1519" y="501" width="21" height="2" fill="url(#pt)"/><rect x="1541" y="501" width="9" height="2" fill="url(#pa)"/><rect x="1550" y="501" width="1" height="2" fill="url(#px)"/><rect x="1551" y="501" width="1" height="2" fill="url(#px)"/><rect x="1552" y="501" width="36" height="2" fill="url(#ps)"/><rect x="1588" y="501" width="1" height="2" fill="url(#px)"/><rect x="1589" y="501" width="1" height="2" fill="url(#px)"/><rect x="1522" y="503" width="1" height="2" fill="url(#px)"/><rect x="1523" y="503" width="11" height="2" fill="url(#pt)"/><rect x="1534" y="503" width="1" height="2" fill="url(#px)"/><rect x="1526" y="505" width="76" height="2" fill="url(#px)"/><rect x="1602" y="505" width="2" height="2" fill="url(#px)"/><rect x="1604" y="505" width="11" height="2" fill="url(#pt)"/><rect x="1615" y="505" width="1" height="2" fill="url(#px)"/><rect x="1518" y="507" width="2" height="2" fill="url(#px)"/><rect x="1520" y="507" width="21" height="2" fill="url(#pt)"/><rect x="1541" y="507" width="1" height="2" fill="url(#px)"/><rect x="1514" y="509" width="2" height="2" fill="url(#px)"/><rect x="1516" y="509" width="28" height="2" fill="url(#pt)"/><rect x="1544" y="509" width="1" height="2" fill="url(#px)"/><rect x="1510" y="511" width="2" height="2" fill="url(#px)"/><rect x="1512" y="511" width="14" height="2" fill="url(#pt)"/><rect x="1526" y="511" width="1" height="2" fill="url(#px)"/><rect x="1510" y="513" width="1" height="2" fill="url(#px)"/><rect x="1511" y="513" width="16" height="2" fill="url(#pt)"/><rect x="1528" y="513" width="26" height="2" fill="url(#pa)"/><rect x="1554" y="513" width="1" height="2" fill="url(#px)"/><rect x="1555" y="513" width="1" height="2" fill="url(#px)"/><rect x="1556" y="513" width="36" height="2" fill="url(#ps)"/><rect x="1592" y="513" width="1" height="2" fill="url(#px)"/><rect x="1593" y="513" width="1" height="2" fill="url(#px)"/><rect x="1514" y="515" width="1" height="2" fill="url(#px)"/><rect x="1515" y="515" width="13" height="2" fill="url(#pt)"/><rect x="1529" y="515" width="3" height="2" fill="url(#pa)"/><rect x="1532" y="515" width="1" height="2" fill="url(#px)"/><rect x="1533" y="515" width="1" height="2" fill="url(#px)"/><rect x="1534" y="515" width="7" height="2" fill="url(#ps)"/><rect x="1541" y="515" width="1" height="2" fill="url(#px)"/><rect x="1542" y="515" width="1" height="2" fill="url(#px)"/><rect x="1518" y="517" width="1" height="2" fill="url(#px)"/><rect x="1519" y="517" width="7" height="2" fill="url(#pt)"/><rect x="1527" y="517" width="5" height="2" fill="url(#pa)"/><rect x="1532" y="517" width="1" height="2" fill="url(#px)"/><rect x="1533" y="517" width="1" height="2" fill="url(#px)"/><rect x="1534" y="517" width="34" height="2" fill="url(#ps)"/><rect x="1568" y="517" width="1" height="2" fill="url(#px)"/><rect x="1569" y="517" width="1" height="2" fill="url(#px)"/><rect x="1522" y="519" width="1" height="2" fill="url(#px)"/><rect x="1523" y="519" width="8" height="2" fill="url(#pt)"/><rect x="1531" y="519" width="1" height="2" fill="url(#px)"/><rect x="1526" y="521" width="1" height="2" fill="url(#px)"/><rect x="1527" y="521" width="15" height="2" fill="url(#pt)"/><rect x="1542" y="521" width="1" height="2" fill="url(#px)"/><rect x="1530" y="523" width="25" height="2" fill="url(#px)"/><rect x="1526" y="525" width="2" height="2" fill="url(#px)"/><rect x="1528" y="525" width="15" height="2" fill="url(#pt)"/><rect x="1543" y="525" width="1" height="2" fill="url(#px)"/><rect x="1522" y="527" width="2" height="2" fill="url(#px)"/><rect x="1524" y="527" width="8" height="2" fill="url(#pt)"/><rect x="1532" y="527" width="1" height="2" fill="url(#px)"/><rect x="1518" y="529" width="2" height="2" fill="url(#px)"/><rect x="1520" y="529" width="7" height="2" fill="url(#pt)"/><rect x="1527" y="529" width="1" height="2" fill="url(#px)"/><rect x="1514" y="531" width="2" height="2" fill="url(#px)"/><rect x="1516" y="531" width="13" height="2" fill="url(#pt)"/><rect x="1529" y="531" width="1" height="2" fill="url(#px)"/><rect x="1514" y="533" width="1" height="2" fill="url(#px)"/><rect x="1515" y="533" width="19" height="2" fill="url(#pt)"/><rect x="1535" y="533" width="7" height="2" fill="url(#pa)"/><rect x="1542" y="533" width="1" height="2" fill="url(#px)"/><rect x="1543" y="533" width="1" height="2" fill="url(#px)"/><rect x="1544" y="533" width="50" height="2" fill="url(#ps)"/><rect x="1594" y="533" width="1" height="2" fill="url(#px)"/><rect x="1518" y="535" width="8" height="2" fill="url(#pa)"/><rect x="1526" y="535" width="1" height="2" fill="url(#px)"/><rect x="1527" y="535" width="1" height="2" fill="url(#px)"/><rect x="1528" y="535" width="76" height="2" fill="url(#ps)"/><rect x="1604" y="535" width="1" height="2" fill="url(#px)"/><rect x="1606" y="535" width="2" height="2" fill="url(#px)"/><rect x="1514" y="537" width="1" height="2" fill="url(#px)"/><rect x="1515" y="537" width="19" height="2" fill="url(#pt)"/><rect x="1535" y="537" width="7" height="2" fill="url(#pa)"/><rect x="1542" y="537" width="1" height="2" fill="url(#px)"/><rect x="1543" y="537" width="1" height="2" fill="url(#px)"/><rect x="1544" y="537" width="50" height="2" fill="url(#ps)"/><rect x="1594" y="537" width="1" height="2" fill="url(#px)"/><rect x="1518" y="539" width="8" height="2" fill="url(#pa)"/><rect x="1526" y="539" width="1" height="2" fill="url(#px)"/><rect x="1527" y="539" width="1" height="2" fill="url(#px)"/><rect x="1528" y="539" width="76" height="2" fill="url(#ps)"/><rect x="1604" y="539" width="1" height="2" fill="url(#px)"/><rect x="1606" y="539" width="2" height="2" fill="url(#px)"/><rect x="1514" y="541" width="1" height="2" fill="url(#px)"/><rect x="1515" y="541" width="19" height="2" fill="url(#pt)"/><rect x="1535" y="541" width="7" height="2" fill="url(#pa)"/><rect x="1542" y="541" width="1" height="2" fill="url(#px)"/><rect x="1543" y="541" width="1" height="2" fill="url(#px)"/><rect x="1544" y="541" width="46" height="2" fill="url(#ps)"/><rect x="1590" y="541" width="1" height="2" fill="url(#px)"/><rect x="1518" y="543" width="8" height="2" fill="url(#pa)"/><rect x="1526" y="543" width="1" height="2" fill="url(#px)"/><rect x="1527" y="543" width="1" height="2" fill="url(#px)"/><rect x="1528" y="543" width="76" height="2" fill="url(#ps)"/><rect x="1604" y="543" width="1" height="2" fill="url(#px)"/><rect x="1606" y="543" width="2" height="2" fill="url(#px)"/><rect x="1510" y="545" width="2" height="2" fill="url(#px)"/><rect x="1512" y="545" width="16" height="2" fill="url(#pt)"/><rect x="1528" y="545" width="1" height="2" fill="url(#px)"/><rect x="1506" y="547" width="2" height="2" fill="url(#px)"/><rect x="1508" y="547" width="16" height="2" fill="url(#pt)"/><rect x="1524" y="547" width="1" height="2" fill="url(#px)"/></g><rect x="1530" y="523" width="25" height="2" fill="#a9cdf7"/></svg>
<div class="abs" style="left:1618px;top:881px;width:15px;height:2px;background:#5b8ee0"></div>

<div id="status"></div>
<div class="abs" style="left:1059px;top:1076px;width:48px;height:30px;background:#e9eaec"></div>
<svg class="abs" style="left:1071px;top:1079px" width="24" height="24" viewBox="0 0 24 24"><circle cx="10" cy="10" r="6.5" fill="none" stroke="#5e6570" stroke-width="1.5"/><path d="M14.8 14.8 L20 20 M7 10 H13" stroke="#5e6570" stroke-width="1.5"/></svg>
<div class="st" style="left:1118px;letter-spacing:0.52px">Ln 193, Col 25 (25 selected)</div>
<div class="st" style="left:1367px;letter-spacing:0.3px">Spaces: 4</div>
<div class="st" style="left:1467px;letter-spacing:0.9px">UTF-8</div>
<div class="st" style="left:1540px;letter-spacing:0px">LF</div>
<div class="st" style="left:1581px;letter-spacing:0.5px">XML</div>
<div class="abs" style="left:0;top:1105px;width:1633px;height:1px;background:#ececec"></div>
<svg class="abs" style="left:0;top:0" width="1633" height="1106"><path d="M0 1100 A8 6 0 0 0 9 1106 L0 1106 Z" fill="#d0d0d0"/><path d="M0 1100 A8 6 0 0 0 9 1106" fill="none" stroke="#a8a8a8" stroke-width="1.2"/><path d="M1633 1097 A10 9 0 0 1 1623 1106 L1633 1106 Z" fill="#c4c4c4"/><path d="M1633 1097 A10 9 0 0 1 1623 1106" fill="none" stroke="#a0a0a0" stroke-width="1.2"/></svg>
</div>
</body></html>
